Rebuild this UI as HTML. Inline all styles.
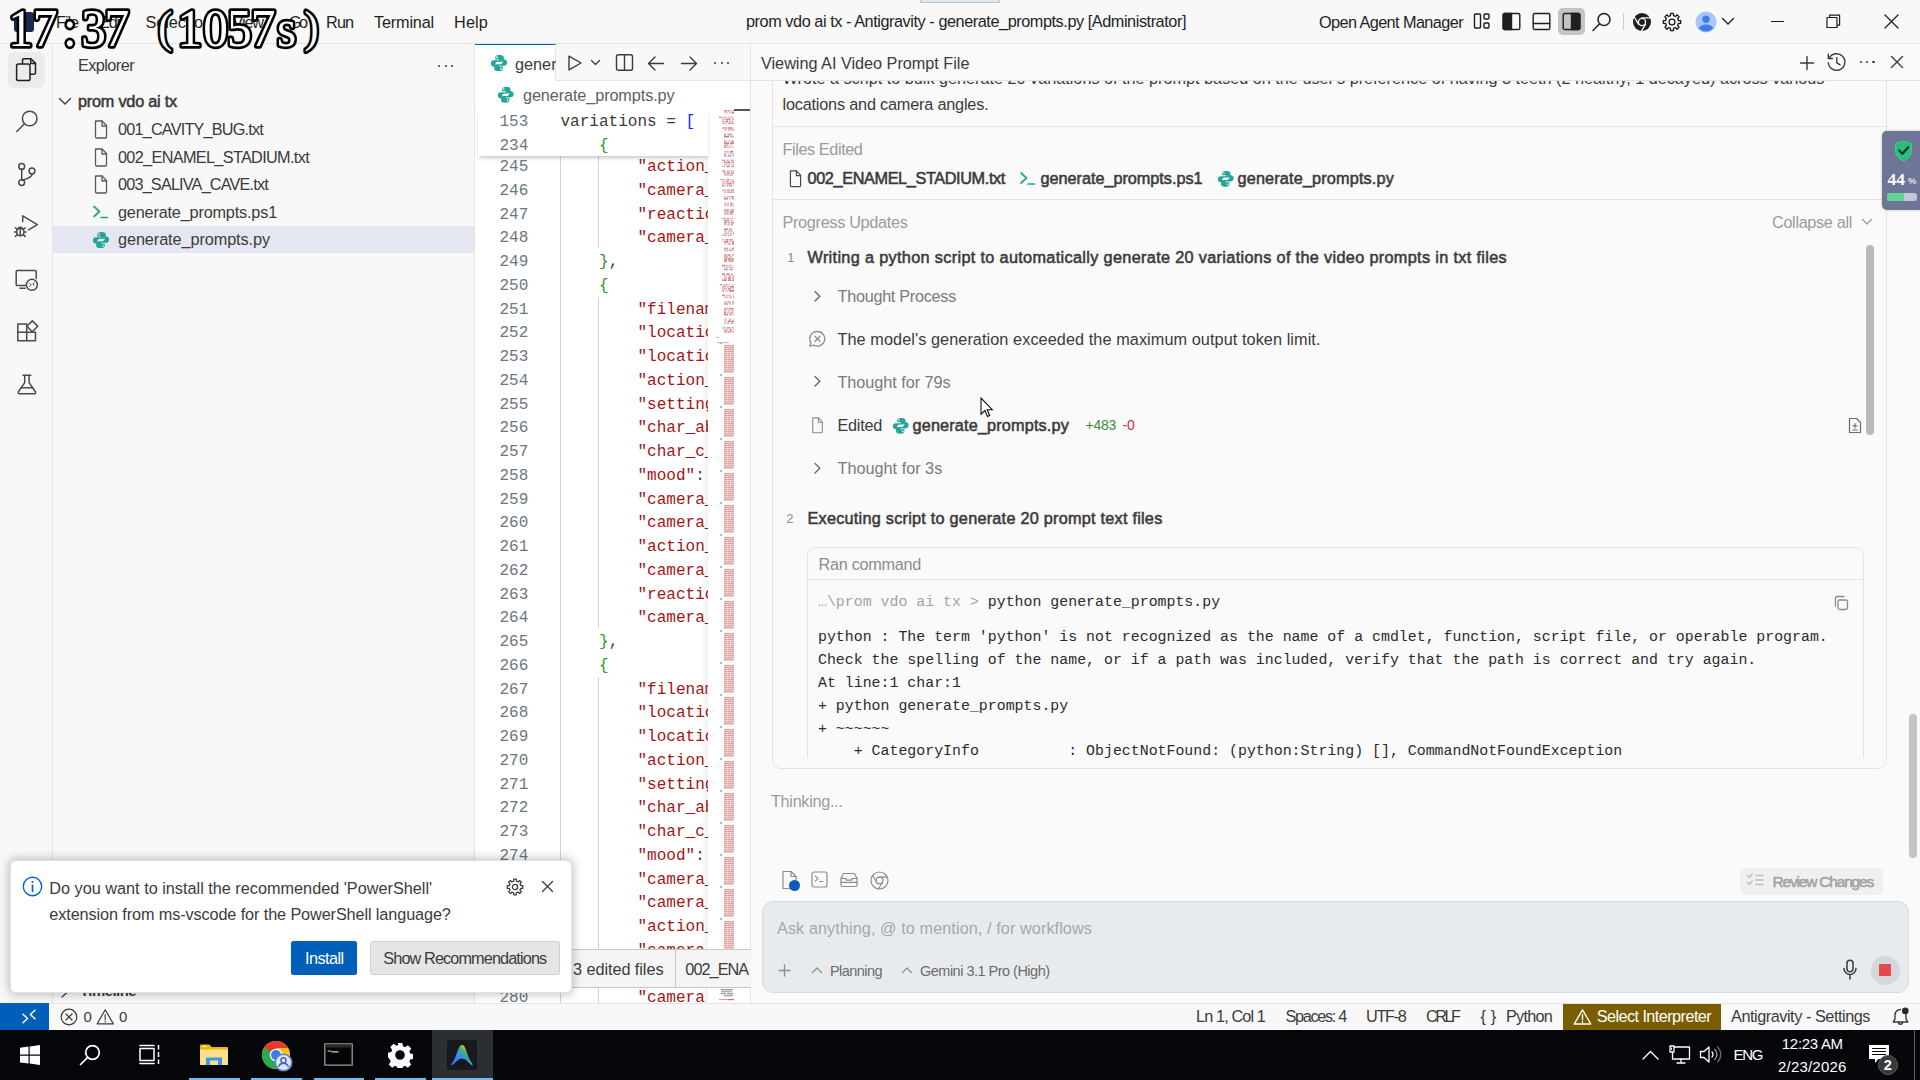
<!DOCTYPE html>
<html lang="en"><head><meta charset="utf-8"><title>prom vdo ai tx - Antigravity</title>
<style>
*{box-sizing:border-box;margin:0;padding:0}
html,body{width:1920px;height:1080px;overflow:hidden;background:#f8f8f8}
body{font-family:"Liberation Sans",sans-serif;position:relative}
.a{position:absolute;display:block}
.t{position:absolute;white-space:pre;line-height:20px;display:block}
.m{font-family:"Liberation Mono",monospace}
.sf{font-family:"Liberation Serif",serif}
</style></head>
<body>
<div class="a" style="left:0px;top:0px;width:1920px;height:44px;background:#f8f8f8;border-bottom:1px solid #e5e5e5;"></div>
<div class="a" style="left:920px;top:-1px;width:80px;height:4px;background:#dfe6ee;border:1px solid #b9c4d2;"></div>
<div class="a" style="left:14px;top:12px;width:20px;height:20px;background:#1b2a55;border-radius:3px;"></div>
<span class="t" id="t1" style="left:56px;top:11.97px;font-size:16.25px;color:#1f1f1f;letter-spacing:-1.047px;">File</span>
<span class="t" id="t2" style="left:99px;top:11.97px;font-size:16.25px;color:#1f1f1f;letter-spacing:-1.129px;">Edit</span>
<span class="t" id="t3" style="left:145.5px;top:11.97px;font-size:16.25px;color:#1f1f1f;letter-spacing:-0.040px;">Selection</span>
<span class="t" id="t4" style="left:232.5px;top:11.97px;font-size:16.25px;color:#1f1f1f;letter-spacing:-1.109px;">View</span>
<span class="t" id="t5" style="left:289px;top:11.97px;font-size:16.25px;color:#1f1f1f;letter-spacing:-2.594px;">Go</span>
<span class="t" id="t6" style="left:326px;top:11.97px;font-size:16.25px;color:#1f1f1f;letter-spacing:-0.837px;">Run</span>
<span class="t" id="t7" style="left:374px;top:11.97px;font-size:16.25px;color:#1f1f1f;letter-spacing:-0.176px;">Terminal</span>
<span class="t" id="t8" style="left:454px;top:11.97px;font-size:16.25px;color:#1f1f1f;letter-spacing:0.145px;">Help</span>
<span class="t" id="t9" style="left:746px;top:11.27px;font-size:16.25px;color:#1f1f1f;letter-spacing:-0.436px;">prom vdo ai tx - Antigravity - generate_prompts.py [Administrator]</span>
<span class="t" id="t10" style="left:1319px;top:11.57px;font-size:16.25px;color:#1f1f1f;letter-spacing:-0.583px;">Open Agent Manager</span>
<svg class="a" style="left:1473px;top:12px;" width="18" height="18" viewBox="0 0 18 18" fill="none" stroke="#1f1f1f" stroke-width="1.4" stroke-linecap="round" stroke-linejoin="round"><rect x="1.5" y="2" width="6" height="14" rx="1"/><rect x="11" y="2" width="5" height="5" rx="1"/><rect x="11" y="11" width="5" height="5" rx="1"/></svg>
<svg class="a" style="left:1502px;top:12px;" width="19" height="19" viewBox="0 0 19 19" fill="none" stroke="#1f1f1f" stroke-width="1.4" stroke-linecap="round" stroke-linejoin="round"><rect x="1.2" y="1.5" width="16.6" height="16" rx="1.6"/><path d="M1.2 3.1a1.6 1.6 0 0 1 1.6-1.6H9.5v16H2.8a1.6 1.6 0 0 1-1.6-1.6z" fill="#1f1f1f"/></svg>
<svg class="a" style="left:1532px;top:12px;" width="19" height="19" viewBox="0 0 19 19" fill="none" stroke="#1f1f1f" stroke-width="1.4" stroke-linecap="round" stroke-linejoin="round"><rect x="1.2" y="1.5" width="16.6" height="16" rx="1.6"/><path d="M1.2 11.5h16.6"/></svg>
<div class="a" style="left:1558px;top:8px;width:27px;height:27px;background:#c4c4c4;border-radius:5px;"></div>
<svg class="a" style="left:1562px;top:12px;" width="19" height="19" viewBox="0 0 19 19" fill="none" stroke="#1f1f1f" stroke-width="1.4" stroke-linecap="round" stroke-linejoin="round"><rect x="1.2" y="1.5" width="16.6" height="16" rx="1.6"/><path d="M9.5 1.5h6.7a1.6 1.6 0 0 1 1.6 1.6v12.8a1.6 1.6 0 0 1-1.6 1.6H9.5z" fill="#1f1f1f"/></svg>
<svg class="a" style="left:1591px;top:11px;" width="22" height="22" viewBox="0 0 22 22" fill="none" stroke="#1f1f1f" stroke-width="1.5" stroke-linecap="round" stroke-linejoin="round"><circle cx="13" cy="8.5" r="6"/><path d="M8.7 12.8L2 19.5"/></svg>
<div class="a" style="left:1623px;top:13px;width:1px;height:17px;background:#cfcfcf;"></div>
<svg class="a" style="left:1632px;top:12px;" width="20" height="20" viewBox="0 0 20 20" fill="none" stroke="#424242" stroke-width="1.25" stroke-linecap="round" stroke-linejoin="round"><circle cx="10" cy="10" r="9" fill="#1f1f1f" stroke="none"/><circle cx="10" cy="10" r="4.2" fill="#f8f8f8" stroke="none"/><circle cx="10" cy="10" r="2.9" fill="#1f1f1f" stroke="none"/><path d="M10 5.8h8.2M6.4 12.1L2.3 5M13.6 12.1L9.5 19.2" stroke="#f8f8f8" stroke-width="1.3"/></svg>
<svg class="a" style="left:1662px;top:12px;" width="20" height="20" viewBox="0 0 20 20" fill="none" stroke="#1f1f1f" stroke-width="1.35" stroke-linecap="round" stroke-linejoin="round"><path d="M16.44 8.54L18.68 8.56L18.68 11.44L16.44 11.46L15.58 13.52L17.16 15.12L15.12 17.16L13.52 15.58L11.46 16.44L11.44 18.68L8.56 18.68L8.54 16.44L6.48 15.58L4.88 17.16L2.84 15.12L4.42 13.52L3.56 11.46L1.32 11.44L1.32 8.56L3.56 8.54L4.42 6.48L2.84 4.88L4.88 2.84L6.48 4.42L8.54 3.56L8.56 1.32L11.44 1.32L11.46 3.56L13.52 4.42L15.12 2.84L17.16 4.88L15.58 6.48z"/><circle cx="10" cy="10" r="2.9"/></svg>
<svg class="a" style="left:1695px;top:11px;" width="22" height="22" viewBox="0 0 22 22" fill="none" stroke="#424242" stroke-width="1.25" stroke-linecap="round" stroke-linejoin="round"><circle cx="11" cy="11" r="10.5" fill="#a9c6fb" stroke="none"/><circle cx="11" cy="8.3" r="3.7" fill="#3f7de8" stroke="none"/><path d="M3.8 17.6c1.2-3 4-4 7.2-4s6 1 7.2 4a10.5 10.5 0 0 1-14.4 0z" fill="#3f7de8" stroke="none"/></svg>
<svg class="a" style="left:1721px;top:17px;" width="14" height="9" viewBox="0 0 14 9" fill="none" stroke="#1f1f1f" stroke-width="1.4" stroke-linecap="round" stroke-linejoin="round"><path d="M1.5 1.5L7 7l5.5-5.5"/></svg>
<div class="a" style="left:1771px;top:21px;width:13px;height:1.3px;background:#1f1f1f;"></div>
<svg class="a" style="left:1826px;top:14px;" width="15" height="15" viewBox="0 0 15 15" fill="none" stroke="#1f1f1f" stroke-width="1.2" stroke-linecap="round" stroke-linejoin="round"><rect x="1" y="3.5" width="10" height="10" /><path d="M3.6 3.5V1.2h10v10h-2.4"/></svg>
<svg class="a" style="left:1884px;top:14px;" width="15" height="15" viewBox="0 0 15 15" fill="none" stroke="#1f1f1f" stroke-width="1.3" stroke-linecap="round" stroke-linejoin="round"><path d="M1 1l13 13M14 1L1 14"/></svg>
<div class="a" style="left:0px;top:44px;width:53px;height:959px;background:#f8f8f8;border-right:1px solid #e5e5e5;"></div>
<div class="a" style="left:8px;top:52px;width:37px;height:36px;background:#ebebeb;border-radius:6px;"></div>
<svg class="a" style="left:0;top:44px" width="53" height="400" viewBox="0 44 53 400" fill="none" stroke="#4a4a4a" stroke-width="1.500" stroke-linecap="round" stroke-linejoin="round"><g stroke="#1f1f1f"><path d="M22.500 63.500V60.200a1.400 1.400 0 0 1 1.400-1.400h7l4.600 4.600v9.400a1.400 1.400 0 0 1-1.400 1.400H30.300"/><path d="M30.700 58.900v4.700h4.700"/><rect x="16.600" y="63.900" width="13.400" height="16.600" rx="1.800" fill="#ebebeb"/></g><circle cx="29.700" cy="118.500" r="7.300"/><path d="M24.500 123.800L16.800 131.500"/><circle cx="21.700" cy="166.400" r="2.900"/><circle cx="21.700" cy="182.600" r="2.900"/><circle cx="32" cy="171" r="2.900"/><path d="M21.700 169.300v10.400M32 173.900c0 3.600-4.500 4.300-9.500 6.300"/><path d="M22.700 221.500v-5.700l14.700 8.900-9 5.200"/><circle cx="20.300" cy="232" r="3.700"/><path d="M17.800 229.200a2.600 2.600 0 0 1 5 0M20.300 228.400v7.200M14.500 232h2.100M24 232h2.100M15.400 227.700l1.900 1.700M25.200 227.700l-1.900 1.700M15.400 236.400l1.900-1.800M25.200 236.400l-1.900-1.800"/><path d="M25.500 285.600H17.400a1.200 1.200 0 0 1-1.200-1.200V271.600a1.200 1.200 0 0 1 1.200-1.200H35a1.200 1.200 0 0 1 1.200 1.200V278.500"/><path d="M20 288.300h5.200"/><circle cx="31.900" cy="284.800" r="5.500"/><path d="M29.700 283.300l1.400 1.500-1.400 1.500M34.200 282.700l-1.400 1.300 1.400 1.300" stroke-width="1"/><path d="M17.800 324.100h8.900v16.600h-8.900zM17.800 332.300h17.700v8.400h-8.800"/><path d="M32.300 320.900l5.400 5.400-5.400 5.400-5.400-5.400z"/><path d="M23 375.300h7.800M24.700 375.300v7.300L18.300 392a1.100 1.100 0 0 0 .9 1.700h15.400a1.100 1.100 0 0 0 .9-1.700l-6.400-9.400v-7.300"/><path d="M21.200 387.800h11.400"/></svg>
<div class="a" style="left:53px;top:44px;width:422px;height:959px;background:#f8f8f8;border-right:1px solid #e5e5e5;"></div>
<span class="t" id="t11" style="left:78px;top:55.37px;font-size:16.25px;color:#3b3b3b;letter-spacing:-0.564px;">Explorer</span>
<div class="a" style="left:438px;top:65px;width:2.2px;height:2.2px;background:#3b3b3b;border-radius:50%;"></div>
<div class="a" style="left:444.5px;top:65px;width:2.2px;height:2.2px;background:#3b3b3b;border-radius:50%;"></div>
<div class="a" style="left:451px;top:65px;width:2.2px;height:2.2px;background:#3b3b3b;border-radius:50%;"></div>
<svg class="a" style="left:58px;top:96px;" width="14" height="12" viewBox="0 0 14 12" fill="none" stroke="#3b3b3b" stroke-width="1.4" stroke-linecap="round" stroke-linejoin="round"><path d="M1.5 2.5L7 8l5.5-5.5"/></svg>
<span class="t" id="t12" style="left:78px;top:91.37px;font-size:16.25px;color:#3b3b3b;-webkit-text-stroke:.550px #3b3b3b;letter-spacing:-0.219px;">prom vdo ai tx</span>
<div class="a" style="left:53px;top:225.5px;width:421px;height:27.5px;background:#e4e6f1;"></div>
<svg class="a" style="left:94px;top:120.0px;" width="15" height="20" viewBox="0 0 15 20" fill="none" stroke="#5a5a5a" stroke-width="1.3" stroke-linecap="round" stroke-linejoin="round"><path d="M2 1.5h6.5L13 6v11.3a1.2 1.2 0 0 1-1.2 1.200H3.200A1.2 1.2 0 0 1 2 17.300V2.700A1.2 1.2 0 0 1 3.200 1.500z" transform="translate(-0.5,-0.5)"/><path d="M8 1v5h4.500"/></svg>
<span class="t" id="t13" style="left:118px;top:119.37px;font-size:16.25px;color:#3b3b3b;letter-spacing:-0.809px;">001_CAVITY_BUG.txt</span>
<svg class="a" style="left:94px;top:147.5px;" width="15" height="20" viewBox="0 0 15 20" fill="none" stroke="#5a5a5a" stroke-width="1.3" stroke-linecap="round" stroke-linejoin="round"><path d="M2 1.5h6.5L13 6v11.3a1.2 1.2 0 0 1-1.2 1.200H3.200A1.2 1.2 0 0 1 2 17.300V2.700A1.2 1.2 0 0 1 3.200 1.500z" transform="translate(-0.5,-0.5)"/><path d="M8 1v5h4.500"/></svg>
<span class="t" id="t14" style="left:118px;top:146.87px;font-size:16.25px;color:#3b3b3b;letter-spacing:-0.664px;">002_ENAMEL_STADIUM.txt</span>
<svg class="a" style="left:94px;top:175.0px;" width="15" height="20" viewBox="0 0 15 20" fill="none" stroke="#5a5a5a" stroke-width="1.3" stroke-linecap="round" stroke-linejoin="round"><path d="M2 1.5h6.5L13 6v11.3a1.2 1.2 0 0 1-1.2 1.200H3.200A1.2 1.2 0 0 1 2 17.300V2.700A1.2 1.2 0 0 1 3.200 1.500z" transform="translate(-0.5,-0.5)"/><path d="M8 1v5h4.500"/></svg>
<span class="t" id="t15" style="left:118px;top:174.37px;font-size:16.25px;color:#3b3b3b;letter-spacing:-0.822px;">003_SALIVA_CAVE.txt</span>
<svg class="a" style="left:92px;top:204px;" width="18" height="16" viewBox="0 0 18 16" fill="none" stroke="#2aa592" stroke-width="1.7" stroke-linecap="round" stroke-linejoin="round"><path d="M2 2.500l5.500 5L2 12.500"/><path d="M9 13.500h6.500"/></svg>
<span class="t" id="t16" style="left:118px;top:201.87px;font-size:16.25px;color:#3b3b3b;letter-spacing:-0.180px;">generate_prompts.ps1</span>
<svg class="a" style="left:92px;top:230.5px;" width="18" height="18" viewBox="0 0 16 16" fill="#26a69a" stroke="none" stroke-width="0" stroke-linecap="round" stroke-linejoin="round"><path d="M7.900.8C5.700.8 4.700 1.700 4.700 3v1.900h3.400v.7H3.300C1.900 5.600.8 6.700.8 8.400s1 2.800 2.400 2.800h1.500V9.300c0-1.300 1.100-2.400 2.400-2.400h3.300c1.100 0 1.900-.9 1.900-2V3c0-1.200-1.200-2.200-3-2.200zM6.200 2.100a.75.75 0 1 1 0 1.500.75.75 0 0 1 0-1.500z"/><path d="M8.100 15.200c2.200 0 3.200-.9 3.200-2.200v-1.900H7.900v-.7h4.800c1.400 0 2.500-1.100 2.500-2.800s-1-2.800-2.400-2.800h-1.500v1.900c0 1.300-1.100 2.400-2.400 2.400H5.600c-1.100 0-1.900.9-1.900 2V13c0 1.200 1.200 2.200 3 2.200zM9.800 13.900a.75.750 0 1 1 0-1.500.750.750 0 0 1 0 1.500z"/></svg>
<span class="t" id="t17" style="left:118px;top:229.37px;font-size:16.25px;color:#3b3b3b;letter-spacing:-0.083px;">generate_prompts.py</span>
<span class="t" id="t18" style="left:80px;top:980.80px;font-size:15px;color:#3b3b3b;font-weight:700;letter-spacing:-0.574px;">Timeline</span>
<svg class="a" style="left:60px;top:986px;" width="10" height="12" viewBox="0 0 10 12" fill="none" stroke="#3b3b3b" stroke-width="1.3" stroke-linecap="round" stroke-linejoin="round"><path d="M2 2l5 4.500-5 4.500"/></svg>
<div class="a" style="left:475px;top:44px;width:276px;height:959px;background:#ffffff;border-right:1px solid #e5e5e5;"></div>
<div class="a" style="left:475px;top:44px;width:275px;height:37px;background:#f8f8f8;border-bottom:1px solid #e5e5e5;"></div>
<div class="a" style="left:475px;top:44px;width:81px;height:37px;background:#ffffff;border-top:1.5px solid #005fb8;border-right:1px solid #e5e5e5;overflow:hidden;"></div>
<svg class="a" style="left:489.5px;top:54px;" width="18" height="18" viewBox="0 0 16 16" fill="#26a69a" stroke="none" stroke-width="0" stroke-linecap="round" stroke-linejoin="round"><path d="M7.900.8C5.700.8 4.700 1.700 4.700 3v1.900h3.400v.7H3.300C1.900 5.600.8 6.700.8 8.400s1 2.800 2.400 2.800h1.500V9.300c0-1.300 1.100-2.400 2.400-2.400h3.300c1.100 0 1.900-.9 1.900-2V3c0-1.200-1.200-2.200-3-2.200zM6.200 2.100a.75.75 0 1 1 0 1.500.75.75 0 0 1 0-1.500z"/><path d="M8.100 15.200c2.200 0 3.200-.9 3.200-2.200v-1.900H7.900v-.7h4.800c1.400 0 2.500-1.100 2.500-2.800s-1-2.800-2.400-2.800h-1.500v1.900c0 1.300-1.100 2.400-2.400 2.400H5.600c-1.100 0-1.900.9-1.900 2V13c0 1.200 1.200 2.200 3 2.200zM9.800 13.900a.75.750 0 1 1 0-1.500.750.750 0 0 1 0 1.500z"/></svg>
<div class="a" style="left:515px;top:50px;width:41px;height:28px;overflow:hidden"><span class="t" style="left:0;top:3.8px;font-size:16.25px;color:#3b3b3b">generate_prompts.py</span></div>
<svg class="a" style="left:566px;top:54px;" width="18" height="18" viewBox="0 0 18 18" fill="none" stroke="#3b3b3b" stroke-width="1.4" stroke-linecap="round" stroke-linejoin="round"><path d="M3 2.2l12 6.800-12 6.800z"/></svg>
<svg class="a" style="left:590px;top:59px;" width="11" height="8" viewBox="0 0 11 8" fill="none" stroke="#3b3b3b" stroke-width="1.2" stroke-linecap="round" stroke-linejoin="round"><path d="M1.5 1.500l4 4 4-4"/></svg>
<svg class="a" style="left:615px;top:53px;" width="19" height="19" viewBox="0 0 19 19" fill="none" stroke="#3b3b3b" stroke-width="1.4" stroke-linecap="round" stroke-linejoin="round"><rect x="1.5" y="1.800" width="16" height="15.400" rx="1.800"/><path d="M9.500 1.800v15.400"/></svg>
<svg class="a" style="left:647px;top:55px;" width="18" height="17" viewBox="0 0 18 17" fill="none" stroke="#3b3b3b" stroke-width="1.4" stroke-linecap="round" stroke-linejoin="round"><path d="M16.500 8.500H1.800M8 2L1.500 8.500 8 15"/></svg>
<svg class="a" style="left:680px;top:55px;" width="18" height="17" viewBox="0 0 18 17" fill="none" stroke="#3b3b3b" stroke-width="1.4" stroke-linecap="round" stroke-linejoin="round"><path d="M1.500 8.500h14.700M10 2l6.500 6.500L10 15"/></svg>
<div class="a" style="left:714px;top:62px;width:2.3px;height:2.3px;background:#3b3b3b;border-radius:50%;"></div>
<div class="a" style="left:720.5px;top:62px;width:2.3px;height:2.3px;background:#3b3b3b;border-radius:50%;"></div>
<div class="a" style="left:727px;top:62px;width:2.3px;height:2.3px;background:#3b3b3b;border-radius:50%;"></div>
<svg class="a" style="left:496.5px;top:86px;" width="17.5" height="17.5" viewBox="0 0 16 16" fill="#26a69a" stroke="none" stroke-width="0" stroke-linecap="round" stroke-linejoin="round"><path d="M7.900.8C5.700.8 4.700 1.700 4.700 3v1.900h3.400v.7H3.300C1.900 5.600.8 6.700.8 8.400s1 2.800 2.400 2.800h1.500V9.300c0-1.300 1.100-2.400 2.400-2.400h3.300c1.100 0 1.900-.9 1.900-2V3c0-1.200-1.200-2.200-3-2.200zM6.200 2.100a.75.75 0 1 1 0 1.500.75.75 0 0 1 0-1.500z"/><path d="M8.100 15.200c2.200 0 3.200-.9 3.200-2.200v-1.900H7.900v-.7h4.800c1.400 0 2.500-1.100 2.500-2.800s-1-2.800-2.400-2.800h-1.500v1.900c0 1.300-1.100 2.400-2.400 2.400H5.600c-1.100 0-1.900.9-1.900 2V13c0 1.200 1.200 2.200 3 2.200zM9.800 13.900a.75.750 0 1 1 0-1.500.750.750 0 0 1 0 1.500z"/></svg>
<span class="t" id="t19" style="left:523px;top:85.37px;font-size:16.25px;color:#616161;letter-spacing:-0.109px;">generate_prompts.py</span>
<div class="a" style="left:475px;top:156px;width:232.500px;height:847px;overflow:hidden"><div class="a" style="left:-475px;top:-156px;width:1920px;height:1080px">
<div class="a" style="left:560px;top:156px;width:1px;height:847px;background:#d3d3d3;"></div>
<div class="a" style="left:598px;top:156px;width:1px;height:92.4px;background:#d3d3d3;"></div>
<div class="a" style="left:598px;top:296.5px;width:1px;height:331.8px;background:#d3d3d3;"></div>
<div class="a" style="left:598px;top:676.5px;width:1px;height:330px;background:#d3d3d3;"></div>
<span class="t m" id="t20" style="left:499.5px;top:157.03px;font-size:16.04px;color:#6e7681;">245</span>
<span class="t m" id="t21" style="left:637.5px;top:157.03px;font-size:16.04px;color:#3b3b3b;"><span style="color:#a31515">"action_2"</span>: <span style="color:#a31515">"the teeth shake"</span>,</span>
<span class="t m" id="t22" style="left:499.5px;top:180.78px;font-size:16.04px;color:#6e7681;">246</span>
<span class="t m" id="t23" style="left:637.5px;top:180.78px;font-size:16.04px;color:#3b3b3b;"><span style="color:#a31515">"camera_3"</span>: <span style="color:#a31515">"handheld close"</span>,</span>
<span class="t m" id="t24" style="left:499.5px;top:204.53px;font-size:16.04px;color:#6e7681;">247</span>
<span class="t m" id="t25" style="left:637.5px;top:204.53px;font-size:16.04px;color:#3b3b3b;"><span style="color:#a31515">"reaction"</span>: <span style="color:#a31515">"gasp and scream"</span>,</span>
<span class="t m" id="t26" style="left:499.5px;top:228.28px;font-size:16.04px;color:#6e7681;">248</span>
<span class="t m" id="t27" style="left:637.5px;top:228.28px;font-size:16.04px;color:#3b3b3b;"><span style="color:#a31515">"camera_4"</span>: <span style="color:#a31515">"slow crane out"</span>,</span>
<span class="t m" id="t28" style="left:499.5px;top:252.03px;font-size:16.04px;color:#6e7681;">249</span>
<span class="t m" id="t29" style="left:599.0px;top:252.03px;font-size:16.04px;color:#3b3b3b;"><span style="color:#319331">}</span>,</span>
<span class="t m" id="t30" style="left:499.5px;top:275.78px;font-size:16.04px;color:#6e7681;">250</span>
<span class="t m" id="t31" style="left:599.0px;top:275.78px;font-size:16.04px;color:#3b3b3b;"><span style="color:#319331">{</span></span>
<span class="t m" id="t32" style="left:499.5px;top:299.53px;font-size:16.04px;color:#6e7681;">251</span>
<span class="t m" id="t33" style="left:637.5px;top:299.53px;font-size:16.04px;color:#3b3b3b;"><span style="color:#a31515">"filename"</span>: <span style="color:#a31515">"005_SCENE.txt"</span>,</span>
<span class="t m" id="t34" style="left:499.5px;top:323.28px;font-size:16.04px;color:#6e7681;">252</span>
<span class="t m" id="t35" style="left:637.5px;top:323.28px;font-size:16.04px;color:#3b3b3b;"><span style="color:#a31515">"location_en"</span>: <span style="color:#a31515">"inside the mouth"</span>,</span>
<span class="t m" id="t36" style="left:499.5px;top:347.03px;font-size:16.04px;color:#6e7681;">253</span>
<span class="t m" id="t37" style="left:637.5px;top:347.03px;font-size:16.04px;color:#3b3b3b;"><span style="color:#a31515">"location_th"</span>: <span style="color:#a31515">"in the cave"</span>,</span>
<span class="t m" id="t38" style="left:499.5px;top:370.78px;font-size:16.04px;color:#6e7681;">254</span>
<span class="t m" id="t39" style="left:637.5px;top:370.78px;font-size:16.04px;color:#3b3b3b;"><span style="color:#a31515">"action_1"</span>: <span style="color:#a31515">"The tiny bug digs"</span>,</span>
<span class="t m" id="t40" style="left:499.5px;top:394.53px;font-size:16.04px;color:#6e7681;">255</span>
<span class="t m" id="t41" style="left:637.5px;top:394.53px;font-size:16.04px;color:#3b3b3b;"><span style="color:#a31515">"setting"</span>: <span style="color:#a31515">"wet enamel walls"</span>,</span>
<span class="t m" id="t42" style="left:499.5px;top:418.28px;font-size:16.04px;color:#6e7681;">256</span>
<span class="t m" id="t43" style="left:637.5px;top:418.28px;font-size:16.04px;color:#3b3b3b;"><span style="color:#a31515">"char_ab"</span>: <span style="color:#a31515">"healthy tooth A"</span>,</span>
<span class="t m" id="t44" style="left:499.5px;top:442.03px;font-size:16.04px;color:#6e7681;">257</span>
<span class="t m" id="t45" style="left:637.5px;top:442.03px;font-size:16.04px;color:#3b3b3b;"><span style="color:#a31515">"char_c_desc"</span>: <span style="color:#a31515">"decayed tooth"</span>,</span>
<span class="t m" id="t46" style="left:499.5px;top:465.78px;font-size:16.04px;color:#6e7681;">258</span>
<span class="t m" id="t47" style="left:637.5px;top:465.78px;font-size:16.04px;color:#3b3b3b;"><span style="color:#a31515">"mood"</span>: <span style="color:#a31515">"dark comedy"</span>,</span>
<span class="t m" id="t48" style="left:499.5px;top:489.53px;font-size:16.04px;color:#6e7681;">259</span>
<span class="t m" id="t49" style="left:637.5px;top:489.53px;font-size:16.04px;color:#3b3b3b;"><span style="color:#a31515">"camera_1"</span>: <span style="color:#a31515">"macro dolly in"</span>,</span>
<span class="t m" id="t50" style="left:499.5px;top:513.28px;font-size:16.04px;color:#6e7681;">260</span>
<span class="t m" id="t51" style="left:637.5px;top:513.28px;font-size:16.04px;color:#3b3b3b;"><span style="color:#a31515">"camera_2"</span>: <span style="color:#a31515">"low angle pan"</span>,</span>
<span class="t m" id="t52" style="left:499.5px;top:537.03px;font-size:16.04px;color:#6e7681;">261</span>
<span class="t m" id="t53" style="left:637.5px;top:537.03px;font-size:16.04px;color:#3b3b3b;"><span style="color:#a31515">"action_2"</span>: <span style="color:#a31515">"the teeth shake"</span>,</span>
<span class="t m" id="t54" style="left:499.5px;top:560.78px;font-size:16.04px;color:#6e7681;">262</span>
<span class="t m" id="t55" style="left:637.5px;top:560.78px;font-size:16.04px;color:#3b3b3b;"><span style="color:#a31515">"camera_3"</span>: <span style="color:#a31515">"handheld close"</span>,</span>
<span class="t m" id="t56" style="left:499.5px;top:584.53px;font-size:16.04px;color:#6e7681;">263</span>
<span class="t m" id="t57" style="left:637.5px;top:584.53px;font-size:16.04px;color:#3b3b3b;"><span style="color:#a31515">"reaction"</span>: <span style="color:#a31515">"gasp and scream"</span>,</span>
<span class="t m" id="t58" style="left:499.5px;top:608.28px;font-size:16.04px;color:#6e7681;">264</span>
<span class="t m" id="t59" style="left:637.5px;top:608.28px;font-size:16.04px;color:#3b3b3b;"><span style="color:#a31515">"camera_4"</span>: <span style="color:#a31515">"slow crane out"</span>,</span>
<span class="t m" id="t60" style="left:499.5px;top:632.03px;font-size:16.04px;color:#6e7681;">265</span>
<span class="t m" id="t61" style="left:599.0px;top:632.03px;font-size:16.04px;color:#3b3b3b;"><span style="color:#319331">}</span>,</span>
<span class="t m" id="t62" style="left:499.5px;top:655.78px;font-size:16.04px;color:#6e7681;">266</span>
<span class="t m" id="t63" style="left:599.0px;top:655.78px;font-size:16.04px;color:#3b3b3b;"><span style="color:#319331">{</span></span>
<span class="t m" id="t64" style="left:499.5px;top:679.53px;font-size:16.04px;color:#6e7681;">267</span>
<span class="t m" id="t65" style="left:637.5px;top:679.53px;font-size:16.04px;color:#3b3b3b;"><span style="color:#a31515">"filename"</span>: <span style="color:#a31515">"006_SCENE.txt"</span>,</span>
<span class="t m" id="t66" style="left:499.5px;top:703.28px;font-size:16.04px;color:#6e7681;">268</span>
<span class="t m" id="t67" style="left:637.5px;top:703.28px;font-size:16.04px;color:#3b3b3b;"><span style="color:#a31515">"location_en"</span>: <span style="color:#a31515">"inside the mouth"</span>,</span>
<span class="t m" id="t68" style="left:499.5px;top:727.03px;font-size:16.04px;color:#6e7681;">269</span>
<span class="t m" id="t69" style="left:637.5px;top:727.03px;font-size:16.04px;color:#3b3b3b;"><span style="color:#a31515">"location_th"</span>: <span style="color:#a31515">"in the cave"</span>,</span>
<span class="t m" id="t70" style="left:499.5px;top:750.78px;font-size:16.04px;color:#6e7681;">270</span>
<span class="t m" id="t71" style="left:637.5px;top:750.78px;font-size:16.04px;color:#3b3b3b;"><span style="color:#a31515">"action_1"</span>: <span style="color:#a31515">"The tiny bug digs"</span>,</span>
<span class="t m" id="t72" style="left:499.5px;top:774.53px;font-size:16.04px;color:#6e7681;">271</span>
<span class="t m" id="t73" style="left:637.5px;top:774.53px;font-size:16.04px;color:#3b3b3b;"><span style="color:#a31515">"setting"</span>: <span style="color:#a31515">"wet enamel walls"</span>,</span>
<span class="t m" id="t74" style="left:499.5px;top:798.28px;font-size:16.04px;color:#6e7681;">272</span>
<span class="t m" id="t75" style="left:637.5px;top:798.28px;font-size:16.04px;color:#3b3b3b;"><span style="color:#a31515">"char_ab"</span>: <span style="color:#a31515">"healthy tooth A"</span>,</span>
<span class="t m" id="t76" style="left:499.5px;top:822.03px;font-size:16.04px;color:#6e7681;">273</span>
<span class="t m" id="t77" style="left:637.5px;top:822.03px;font-size:16.04px;color:#3b3b3b;"><span style="color:#a31515">"char_c_desc"</span>: <span style="color:#a31515">"decayed tooth"</span>,</span>
<span class="t m" id="t78" style="left:499.5px;top:845.78px;font-size:16.04px;color:#6e7681;">274</span>
<span class="t m" id="t79" style="left:637.5px;top:845.78px;font-size:16.04px;color:#3b3b3b;"><span style="color:#a31515">"mood"</span>: <span style="color:#a31515">"dark comedy"</span>,</span>
<span class="t m" id="t80" style="left:499.5px;top:869.53px;font-size:16.04px;color:#6e7681;">275</span>
<span class="t m" id="t81" style="left:637.5px;top:869.53px;font-size:16.04px;color:#3b3b3b;"><span style="color:#a31515">"camera_1"</span>: <span style="color:#a31515">"macro dolly in"</span>,</span>
<span class="t m" id="t82" style="left:499.5px;top:893.28px;font-size:16.04px;color:#6e7681;">276</span>
<span class="t m" id="t83" style="left:637.5px;top:893.28px;font-size:16.04px;color:#3b3b3b;"><span style="color:#a31515">"camera_2"</span>: <span style="color:#a31515">"low angle pan"</span>,</span>
<span class="t m" id="t84" style="left:499.5px;top:917.03px;font-size:16.04px;color:#6e7681;">277</span>
<span class="t m" id="t85" style="left:637.5px;top:917.03px;font-size:16.04px;color:#3b3b3b;"><span style="color:#a31515">"action_2"</span>: <span style="color:#a31515">"the teeth shake"</span>,</span>
<span class="t m" id="t86" style="left:499.5px;top:940.78px;font-size:16.04px;color:#6e7681;">278</span>
<span class="t m" id="t87" style="left:637.5px;top:940.78px;font-size:16.04px;color:#3b3b3b;"><span style="color:#a31515">"camera_3"</span>: <span style="color:#a31515">"handheld close"</span>,</span>
<span class="t m" id="t88" style="left:499.5px;top:964.53px;font-size:16.04px;color:#6e7681;">279</span>
<span class="t m" id="t89" style="left:637.5px;top:964.53px;font-size:16.04px;color:#3b3b3b;"><span style="color:#a31515">"reaction"</span>: <span style="color:#a31515">"gasp and scream"</span>,</span>
<span class="t m" id="t90" style="left:499.5px;top:988.28px;font-size:16.04px;color:#6e7681;">280</span>
<span class="t m" id="t91" style="left:637.5px;top:988.28px;font-size:16.04px;color:#3b3b3b;"><span style="color:#a31515">"camera_4"</span>: <span style="color:#a31515">"slow crane out"</span>,</span>
</div></div>
<div class="a" style="left:478px;top:108px;width:229.5px;height:48px;background:#ffffff;box-shadow:0 3px 4px -1px rgba(0,0,0,.22);"></div>
<span class="t m" id="t92" style="left:499.5px;top:112.13px;font-size:16.04px;color:#6e7681;">153</span>
<span class="t m" id="t93" style="left:560.5px;top:112.13px;font-size:16.04px;color:#3b3b3b;">variations = <span style="color:#0431fa">[</span></span>
<span class="t m" id="t94" style="left:499.5px;top:135.93px;font-size:16.04px;color:#6e7681;">234</span>
<span class="t m" id="t95" style="left:599.0px;top:135.93px;font-size:16.04px;color:#319331;">{</span>
<div class="a" style="left:701px;top:156px;width:7px;height:847px;background:linear-gradient(to right,rgba(255,255,255,0),rgba(0,0,0,.06));"></div>
<div class="a" style="left:734px;top:109px;width:16px;height:2px;background:#555555;"></div>
<svg class="a" style="left:716px;top:108px;opacity:.720;" width="20" height="240" viewBox="0 0 20 240" fill="none" stroke="none" stroke-width="0" stroke-linecap="round" stroke-linejoin="round"><rect x="8.0" y="2.0" width="3.0" height="1.600" fill="#c25a5a" opacity="0.95"/><rect x="11.6" y="2.0" width="2.0" height="1.600" fill="#b64545" opacity="0.85"/><rect x="14.2" y="2.0" width="3.8" height="1.600" fill="#c25a5a" opacity="0.55"/><rect x="8.0" y="4.0" width="4.0" height="1.600" fill="#cf7a7a" opacity="0.55"/><rect x="13.0" y="4.0" width="2.0" height="1.600" fill="#cf7a7a" opacity="0.55"/><rect x="15.6" y="4.0" width="2.4" height="1.600" fill="#b64545" opacity="0.95"/><rect x="3.0" y="8.6" width="3.0" height="1.600" fill="#b64545" opacity="0.7"/><rect x="7.0" y="8.6" width="4.0" height="1.600" fill="#c25a5a" opacity="0.55"/><rect x="12.0" y="8.6" width="5.0" height="1.600" fill="#c25a5a" opacity="0.55"/><rect x="6.0" y="10.6" width="3.0" height="1.600" fill="#b64545" opacity="0.55"/><rect x="9.6" y="10.6" width="5.0" height="1.600" fill="#c25a5a" opacity="0.95"/><rect x="16.1" y="10.6" width="1.9" height="1.600" fill="#cf7a7a" opacity="0.95"/><rect x="6.0" y="12.6" width="3.0" height="1.600" fill="#c25a5a" opacity="0.7"/><rect x="10.0" y="12.6" width="2.0" height="1.600" fill="#a83a3a" opacity="0.95"/><rect x="13.0" y="12.6" width="4.0" height="1.600" fill="#a83a3a" opacity="0.55"/><rect x="6.0" y="14.6" width="5.0" height="1.600" fill="#cf7a7a" opacity="0.7"/><rect x="12.0" y="14.6" width="3.0" height="1.600" fill="#cf7a7a" opacity="0.95"/><rect x="15.6" y="14.6" width="2.0" height="1.600" fill="#a83a3a" opacity="0.85"/><rect x="6.0" y="19.2" width="5.0" height="1.600" fill="#cf7a7a" opacity="0.95"/><rect x="11.6" y="19.2" width="2.0" height="1.600" fill="#a83a3a" opacity="0.95"/><rect x="14.2" y="19.2" width="2.0" height="1.600" fill="#a83a3a" opacity="0.95"/><rect x="17.2" y="19.2" width="0.8" height="1.600" fill="#a83a3a" opacity="0.55"/><rect x="8.0" y="21.2" width="3.0" height="1.600" fill="#c25a5a" opacity="0.55"/><rect x="12.5" y="21.2" width="2.0" height="1.600" fill="#c25a5a" opacity="0.85"/><rect x="15.5" y="21.2" width="2.5" height="1.600" fill="#cf7a7a" opacity="0.95"/><rect x="8.0" y="25.8" width="2.0" height="1.600" fill="#c25a5a" opacity="0.95"/><rect x="11.5" y="25.8" width="5.0" height="1.600" fill="#a83a3a" opacity="0.7"/><rect x="8.0" y="27.8" width="5.0" height="1.600" fill="#a83a3a" opacity="0.95"/><rect x="14.0" y="27.8" width="4.0" height="1.600" fill="#6a6ad8" opacity="0.7"/><rect x="8.0" y="32.4" width="3.0" height="1.600" fill="#c25a5a" opacity="0.7"/><rect x="12.0" y="32.4" width="2.0" height="1.600" fill="#cf7a7a" opacity="0.7"/><rect x="15.0" y="32.4" width="3.0" height="1.600" fill="#b64545" opacity="0.7"/><rect x="8.0" y="34.4" width="5.0" height="1.600" fill="#a83a3a" opacity="0.85"/><rect x="14.0" y="34.4" width="4.0" height="1.600" fill="#b64545" opacity="0.95"/><rect x="8.0" y="36.4" width="4.0" height="1.600" fill="#cf7a7a" opacity="0.95"/><rect x="12.6" y="36.4" width="4.0" height="1.600" fill="#cf7a7a" opacity="0.55"/><rect x="8.0" y="38.4" width="2.0" height="1.600" fill="#c25a5a" opacity="0.95"/><rect x="11.0" y="38.4" width="2.0" height="1.600" fill="#a83a3a" opacity="0.55"/><rect x="13.6" y="38.4" width="2.0" height="1.600" fill="#c25a5a" opacity="0.55"/><rect x="16.6" y="38.4" width="1.4" height="1.600" fill="#b64545" opacity="0.55"/><rect x="8.0" y="43.0" width="5.0" height="1.600" fill="#cf7a7a" opacity="0.7"/><rect x="14.0" y="43.0" width="3.0" height="1.600" fill="#a83a3a" opacity="0.95"/><rect x="8.0" y="45.0" width="2.0" height="1.600" fill="#cf7a7a" opacity="0.95"/><rect x="11.5" y="45.0" width="4.0" height="1.600" fill="#8585e0" opacity="0.55"/><rect x="16.5" y="45.0" width="1.5" height="1.600" fill="#8585e0" opacity="0.85"/><rect x="8.0" y="47.0" width="3.0" height="1.600" fill="#b64545" opacity="0.7"/><rect x="12.0" y="47.0" width="3.0" height="1.600" fill="#6a6ad8" opacity="0.85"/><rect x="15.6" y="47.0" width="2.4" height="1.600" fill="#8585e0" opacity="0.7"/><rect x="6.0" y="51.6" width="3.0" height="1.600" fill="#a83a3a" opacity="0.7"/><rect x="10.0" y="51.6" width="3.0" height="1.600" fill="#cf7a7a" opacity="0.7"/><rect x="14.0" y="51.6" width="4.0" height="1.600" fill="#cf7a7a" opacity="0.85"/><rect x="8.0" y="53.6" width="2.0" height="1.600" fill="#a83a3a" opacity="0.95"/><rect x="11.0" y="53.6" width="3.0" height="1.600" fill="#a83a3a" opacity="0.95"/><rect x="15.0" y="53.6" width="3.0" height="1.600" fill="#b64545" opacity="0.7"/><rect x="8.0" y="55.6" width="3.0" height="1.600" fill="#cf7a7a" opacity="0.7"/><rect x="12.0" y="55.6" width="3.0" height="1.600" fill="#cf7a7a" opacity="0.55"/><rect x="16.5" y="55.6" width="1.5" height="1.600" fill="#b64545" opacity="0.55"/><rect x="6.0" y="57.6" width="3.0" height="1.600" fill="#cf7a7a" opacity="0.7"/><rect x="10.5" y="57.6" width="3.0" height="1.600" fill="#b64545" opacity="0.95"/><rect x="15.0" y="57.6" width="3.0" height="1.600" fill="#b64545" opacity="0.7"/><rect x="6.0" y="62.2" width="3.0" height="1.600" fill="#b64545" opacity="0.7"/><rect x="10.5" y="62.2" width="3.0" height="1.600" fill="#cf7a7a" opacity="0.85"/><rect x="14.5" y="62.2" width="3.5" height="1.600" fill="#c25a5a" opacity="0.55"/><rect x="8.0" y="64.2" width="2.0" height="1.600" fill="#c25a5a" opacity="0.95"/><rect x="11.0" y="64.2" width="3.0" height="1.600" fill="#b64545" opacity="0.85"/><rect x="15.0" y="64.2" width="3.0" height="1.600" fill="#c25a5a" opacity="0.85"/><rect x="8.0" y="66.2" width="5.0" height="1.600" fill="#cf7a7a" opacity="0.7"/><rect x="13.6" y="66.2" width="3.0" height="1.600" fill="#cf7a7a" opacity="0.95"/><rect x="4.0" y="70.8" width="5.0" height="1.600" fill="#c25a5a" opacity="0.55"/><rect x="10.5" y="70.8" width="3.0" height="1.600" fill="#b64545" opacity="0.7"/><rect x="14.5" y="70.8" width="3.0" height="1.600" fill="#cf7a7a" opacity="0.55"/><rect x="6.0" y="72.8" width="3.0" height="1.600" fill="#cf7a7a" opacity="0.55"/><rect x="9.6" y="72.8" width="3.0" height="1.600" fill="#c25a5a" opacity="0.85"/><rect x="13.2" y="72.8" width="2.0" height="1.600" fill="#cf7a7a" opacity="0.55"/><rect x="15.8" y="72.8" width="2.2" height="1.600" fill="#a83a3a" opacity="0.7"/><rect x="6.0" y="74.8" width="4.0" height="1.600" fill="#cf7a7a" opacity="0.7"/><rect x="11.0" y="74.8" width="5.0" height="1.600" fill="#c25a5a" opacity="0.95"/><rect x="17.0" y="74.8" width="1.0" height="1.600" fill="#b64545" opacity="0.95"/><rect x="6.0" y="76.8" width="3.0" height="1.600" fill="#b64545" opacity="0.7"/><rect x="10.5" y="76.8" width="2.0" height="1.600" fill="#c25a5a" opacity="0.85"/><rect x="13.1" y="76.8" width="3.0" height="1.600" fill="#a83a3a" opacity="0.7"/><rect x="17.1" y="76.8" width="0.9" height="1.600" fill="#cf7a7a" opacity="0.7"/><rect x="6.0" y="81.4" width="4.0" height="1.600" fill="#cf7a7a" opacity="0.7"/><rect x="11.0" y="81.4" width="3.0" height="1.600" fill="#cf7a7a" opacity="0.95"/><rect x="15.0" y="81.4" width="3.0" height="1.600" fill="#c25a5a" opacity="0.85"/><rect x="8.0" y="83.4" width="2.0" height="1.600" fill="#a83a3a" opacity="0.55"/><rect x="11.0" y="83.4" width="5.0" height="1.600" fill="#cf7a7a" opacity="0.95"/><rect x="16.6" y="83.4" width="1.4" height="1.600" fill="#a83a3a" opacity="0.85"/><rect x="8.0" y="88.0" width="2.0" height="1.600" fill="#c25a5a" opacity="0.55"/><rect x="10.6" y="88.0" width="3.0" height="1.600" fill="#a83a3a" opacity="0.55"/><rect x="14.6" y="88.0" width="3.0" height="1.600" fill="#c25a5a" opacity="0.95"/><rect x="8.0" y="90.0" width="4.0" height="1.600" fill="#c25a5a" opacity="0.95"/><rect x="13.0" y="90.0" width="2.0" height="1.600" fill="#8585e0" opacity="0.55"/><rect x="16.0" y="90.0" width="2.0" height="1.600" fill="#6a6ad8" opacity="0.85"/><rect x="8.0" y="94.6" width="2.0" height="1.600" fill="#a83a3a" opacity="0.55"/><rect x="11.0" y="94.6" width="2.0" height="1.600" fill="#a83a3a" opacity="0.55"/><rect x="14.5" y="94.6" width="2.0" height="1.600" fill="#a83a3a" opacity="0.95"/><rect x="8.0" y="96.6" width="5.0" height="1.600" fill="#c25a5a" opacity="0.55"/><rect x="14.0" y="96.6" width="2.0" height="1.600" fill="#6a6ad8" opacity="0.85"/><rect x="16.6" y="96.6" width="1.4" height="1.600" fill="#6a6ad8" opacity="0.85"/><rect x="8.0" y="101.2" width="5.0" height="1.600" fill="#c25a5a" opacity="0.85"/><rect x="14.5" y="101.2" width="3.5" height="1.600" fill="#c25a5a" opacity="0.85"/><rect x="8.0" y="103.2" width="2.0" height="1.600" fill="#a83a3a" opacity="0.55"/><rect x="10.6" y="103.2" width="2.0" height="1.600" fill="#c25a5a" opacity="0.95"/><rect x="13.6" y="103.2" width="4.0" height="1.600" fill="#b64545" opacity="0.95"/><rect x="8.0" y="105.2" width="5.0" height="1.600" fill="#cf7a7a" opacity="0.85"/><rect x="14.0" y="105.2" width="3.0" height="1.600" fill="#a83a3a" opacity="0.7"/><rect x="6.0" y="109.8" width="4.0" height="1.600" fill="#a83a3a" opacity="0.55"/><rect x="11.0" y="109.8" width="2.0" height="1.600" fill="#b64545" opacity="0.85"/><rect x="14.5" y="109.8" width="3.0" height="1.600" fill="#b64545" opacity="0.55"/><rect x="8.0" y="111.8" width="5.0" height="1.600" fill="#a83a3a" opacity="0.7"/><rect x="14.0" y="111.8" width="2.0" height="1.600" fill="#cf7a7a" opacity="0.7"/><rect x="17.0" y="111.8" width="1.0" height="1.600" fill="#cf7a7a" opacity="0.55"/><rect x="8.0" y="113.8" width="3.0" height="1.600" fill="#a83a3a" opacity="0.85"/><rect x="12.0" y="113.8" width="2.0" height="1.600" fill="#a83a3a" opacity="0.7"/><rect x="15.0" y="113.8" width="3.0" height="1.600" fill="#b64545" opacity="0.85"/><rect x="8.0" y="115.8" width="2.0" height="1.600" fill="#cf7a7a" opacity="0.85"/><rect x="11.0" y="115.8" width="3.0" height="1.600" fill="#b64545" opacity="0.55"/><rect x="15.0" y="115.8" width="2.0" height="1.600" fill="#c25a5a" opacity="0.95"/><rect x="8.0" y="120.4" width="4.0" height="1.600" fill="#b64545" opacity="0.85"/><rect x="13.0" y="120.4" width="3.0" height="1.600" fill="#b64545" opacity="0.7"/><rect x="8.0" y="122.4" width="3.0" height="1.600" fill="#cf7a7a" opacity="0.7"/><rect x="12.0" y="122.4" width="5.0" height="1.600" fill="#c25a5a" opacity="0.55"/><rect x="8.0" y="124.4" width="5.0" height="1.600" fill="#c25a5a" opacity="0.55"/><rect x="14.0" y="124.4" width="2.0" height="1.600" fill="#b64545" opacity="0.55"/><rect x="17.0" y="124.4" width="1.0" height="1.600" fill="#b64545" opacity="0.95"/><rect x="6.0" y="126.4" width="5.0" height="1.600" fill="#b64545" opacity="0.55"/><rect x="12.0" y="126.4" width="4.0" height="1.600" fill="#a83a3a" opacity="0.55"/><rect x="6.0" y="131.0" width="2.0" height="1.600" fill="#b64545" opacity="0.55"/><rect x="9.5" y="131.0" width="3.0" height="1.600" fill="#b64545" opacity="0.85"/><rect x="13.5" y="131.0" width="3.0" height="1.600" fill="#c25a5a" opacity="0.95"/><rect x="8.0" y="133.0" width="4.0" height="1.600" fill="#b64545" opacity="0.95"/><rect x="13.0" y="133.0" width="2.0" height="1.600" fill="#c25a5a" opacity="0.55"/><rect x="16.0" y="133.0" width="2.0" height="1.600" fill="#a83a3a" opacity="0.85"/><rect x="8.0" y="135.0" width="2.0" height="1.600" fill="#cf7a7a" opacity="0.55"/><rect x="11.5" y="135.0" width="3.0" height="1.600" fill="#b64545" opacity="0.7"/><rect x="16.0" y="135.0" width="2.0" height="1.600" fill="#a83a3a" opacity="0.95"/><rect x="8.0" y="139.6" width="4.0" height="1.600" fill="#b64545" opacity="0.7"/><rect x="13.0" y="139.6" width="2.0" height="1.600" fill="#cf7a7a" opacity="0.55"/><rect x="16.0" y="139.6" width="2.0" height="1.600" fill="#b64545" opacity="0.95"/><rect x="8.0" y="141.6" width="4.0" height="1.600" fill="#c25a5a" opacity="0.7"/><rect x="12.6" y="141.6" width="5.0" height="1.600" fill="#6a6ad8" opacity="0.7"/><rect x="8.0" y="146.2" width="3.0" height="1.600" fill="#c25a5a" opacity="0.85"/><rect x="11.6" y="146.2" width="3.0" height="1.600" fill="#c25a5a" opacity="0.95"/><rect x="16.1" y="146.2" width="1.9" height="1.600" fill="#b64545" opacity="0.7"/><rect x="8.0" y="148.2" width="4.0" height="1.600" fill="#cf7a7a" opacity="0.95"/><rect x="13.0" y="148.2" width="3.0" height="1.600" fill="#cf7a7a" opacity="0.85"/><rect x="8.0" y="150.2" width="3.0" height="1.600" fill="#b64545" opacity="0.85"/><rect x="11.6" y="150.2" width="3.0" height="1.600" fill="#a83a3a" opacity="0.95"/><rect x="15.2" y="150.2" width="2.8" height="1.600" fill="#b64545" opacity="0.85"/><rect x="8.0" y="152.2" width="3.0" height="1.600" fill="#b64545" opacity="0.95"/><rect x="12.5" y="152.2" width="5.0" height="1.600" fill="#b64545" opacity="0.85"/><rect x="6.0" y="156.8" width="3.0" height="1.600" fill="#b64545" opacity="0.85"/><rect x="9.6" y="156.8" width="2.0" height="1.600" fill="#a83a3a" opacity="0.7"/><rect x="12.6" y="156.8" width="3.0" height="1.600" fill="#cf7a7a" opacity="0.85"/><rect x="16.6" y="156.8" width="1.4" height="1.600" fill="#cf7a7a" opacity="0.55"/><rect x="8.0" y="158.8" width="5.0" height="1.600" fill="#c25a5a" opacity="0.55"/><rect x="13.6" y="158.8" width="4.0" height="1.600" fill="#8585e0" opacity="0.7"/><rect x="8.0" y="160.8" width="4.0" height="1.600" fill="#b64545" opacity="0.7"/><rect x="13.0" y="160.8" width="4.0" height="1.600" fill="#8585e0" opacity="0.85"/><rect x="6.0" y="165.4" width="3.0" height="1.600" fill="#a83a3a" opacity="0.85"/><rect x="10.5" y="165.4" width="3.0" height="1.600" fill="#a83a3a" opacity="0.95"/><rect x="15.0" y="165.4" width="2.0" height="1.600" fill="#c25a5a" opacity="0.7"/><rect x="8.0" y="167.4" width="3.0" height="1.600" fill="#cf7a7a" opacity="0.7"/><rect x="12.5" y="167.4" width="3.0" height="1.600" fill="#cf7a7a" opacity="0.95"/><rect x="16.5" y="167.4" width="1.5" height="1.600" fill="#c25a5a" opacity="0.7"/><rect x="8.0" y="169.4" width="3.0" height="1.600" fill="#a83a3a" opacity="0.55"/><rect x="12.0" y="169.4" width="3.0" height="1.600" fill="#a83a3a" opacity="0.85"/><rect x="16.0" y="169.4" width="2.0" height="1.600" fill="#cf7a7a" opacity="0.95"/><rect x="6.0" y="171.4" width="5.0" height="1.600" fill="#c25a5a" opacity="0.95"/><rect x="12.0" y="171.4" width="3.0" height="1.600" fill="#b64545" opacity="0.95"/><rect x="16.0" y="171.4" width="2.0" height="1.600" fill="#a83a3a" opacity="0.7"/><rect x="4.0" y="176.0" width="2.0" height="1.600" fill="#a83a3a" opacity="0.7"/><rect x="7.5" y="176.0" width="4.0" height="1.600" fill="#cf7a7a" opacity="0.95"/><rect x="12.5" y="176.0" width="2.0" height="1.600" fill="#c25a5a" opacity="0.55"/><rect x="16.0" y="176.0" width="2.0" height="1.600" fill="#cf7a7a" opacity="0.55"/><rect x="6.0" y="178.0" width="4.0" height="1.600" fill="#cf7a7a" opacity="0.95"/><rect x="11.0" y="178.0" width="2.0" height="1.600" fill="#c25a5a" opacity="0.7"/><rect x="14.0" y="178.0" width="4.0" height="1.600" fill="#b64545" opacity="0.95"/><rect x="6.0" y="180.0" width="5.0" height="1.600" fill="#b64545" opacity="0.55"/><rect x="12.0" y="180.0" width="3.0" height="1.600" fill="#b64545" opacity="0.85"/><rect x="16.0" y="180.0" width="2.0" height="1.600" fill="#cf7a7a" opacity="0.55"/><rect x="6.0" y="182.0" width="2.0" height="1.600" fill="#a83a3a" opacity="0.7"/><rect x="9.5" y="182.0" width="3.0" height="1.600" fill="#c25a5a" opacity="0.55"/><rect x="13.1" y="182.0" width="4.9" height="1.600" fill="#a83a3a" opacity="0.95"/><rect x="6.0" y="186.6" width="3.0" height="1.600" fill="#c25a5a" opacity="0.95"/><rect x="10.0" y="186.6" width="5.0" height="1.600" fill="#c25a5a" opacity="0.55"/><rect x="16.5" y="186.6" width="1.5" height="1.600" fill="#b64545" opacity="0.55"/><rect x="8.0" y="188.6" width="4.0" height="1.600" fill="#cf7a7a" opacity="0.55"/><rect x="13.0" y="188.6" width="3.0" height="1.600" fill="#cf7a7a" opacity="0.85"/><rect x="17.0" y="188.6" width="1.0" height="1.600" fill="#b64545" opacity="0.85"/><rect x="8.0" y="193.2" width="3.0" height="1.600" fill="#cf7a7a" opacity="0.7"/><rect x="11.6" y="193.2" width="3.0" height="1.600" fill="#b64545" opacity="0.7"/><rect x="16.1" y="193.2" width="1.9" height="1.600" fill="#a83a3a" opacity="0.7"/><rect x="8.0" y="195.2" width="4.0" height="1.600" fill="#c25a5a" opacity="0.85"/><rect x="13.0" y="195.2" width="2.0" height="1.600" fill="#8585e0" opacity="0.7"/><rect x="16.0" y="195.2" width="2.0" height="1.600" fill="#8585e0" opacity="0.55"/><rect x="8.0" y="199.8" width="4.0" height="1.600" fill="#b64545" opacity="0.7"/><rect x="12.6" y="199.8" width="5.0" height="1.600" fill="#c25a5a" opacity="0.95"/><rect x="8.0" y="201.8" width="2.0" height="1.600" fill="#c25a5a" opacity="0.95"/><rect x="11.5" y="201.8" width="3.0" height="1.600" fill="#b64545" opacity="0.55"/><rect x="15.5" y="201.8" width="2.5" height="1.600" fill="#c25a5a" opacity="0.7"/><rect x="8.0" y="203.8" width="2.0" height="1.600" fill="#a83a3a" opacity="0.95"/><rect x="11.0" y="203.8" width="3.0" height="1.600" fill="#cf7a7a" opacity="0.7"/><rect x="14.6" y="203.8" width="2.0" height="1.600" fill="#b64545" opacity="0.85"/><rect x="17.2" y="203.8" width="0.8" height="1.600" fill="#cf7a7a" opacity="0.55"/><rect x="8.0" y="205.8" width="4.0" height="1.600" fill="#a83a3a" opacity="0.85"/><rect x="13.5" y="205.8" width="2.0" height="1.600" fill="#b64545" opacity="0.95"/><rect x="16.5" y="205.8" width="1.5" height="1.600" fill="#cf7a7a" opacity="0.7"/><rect x="8.0" y="210.4" width="3.0" height="1.600" fill="#cf7a7a" opacity="0.55"/><rect x="12.5" y="210.4" width="3.0" height="1.600" fill="#cf7a7a" opacity="0.55"/><rect x="17.0" y="210.4" width="1.0" height="1.600" fill="#cf7a7a" opacity="0.55"/><rect x="8.0" y="212.4" width="3.0" height="1.600" fill="#c25a5a" opacity="0.55"/><rect x="12.0" y="212.4" width="3.0" height="1.600" fill="#a83a3a" opacity="0.85"/><rect x="15.6" y="212.4" width="2.4" height="1.600" fill="#a83a3a" opacity="0.85"/><rect x="8.0" y="214.4" width="2.0" height="1.600" fill="#b64545" opacity="0.55"/><rect x="11.0" y="214.4" width="2.0" height="1.600" fill="#cf7a7a" opacity="0.95"/><rect x="14.5" y="214.4" width="3.0" height="1.600" fill="#cf7a7a" opacity="0.95"/><rect x="6.0" y="219.0" width="4.0" height="1.600" fill="#c25a5a" opacity="0.55"/><rect x="11.0" y="219.0" width="3.0" height="1.600" fill="#c25a5a" opacity="0.85"/><rect x="15.0" y="219.0" width="3.0" height="1.600" fill="#a83a3a" opacity="0.55"/><rect x="8.0" y="221.0" width="4.0" height="1.600" fill="#c25a5a" opacity="0.7"/><rect x="13.5" y="221.0" width="2.0" height="1.600" fill="#b64545" opacity="0.95"/><rect x="16.5" y="221.0" width="1.5" height="1.600" fill="#cf7a7a" opacity="0.55"/><rect x="8.0" y="223.0" width="3.0" height="1.600" fill="#b64545" opacity="0.7"/><rect x="11.6" y="223.0" width="4.0" height="1.600" fill="#cf7a7a" opacity="0.95"/><rect x="16.6" y="223.0" width="1.4" height="1.600" fill="#c25a5a" opacity="0.95"/><rect x="0" y="229" width="3" height="1" fill="#999"/><rect x="1" y="234" width="12" height="1.200" fill="#8a8a8a" opacity=".7"/></svg>
<div class="a" style="left:724px;top:345px;width:9.5px;height:28px;background:repeating-linear-gradient(to bottom,rgba(200,96,96,.6) 0,rgba(200,96,96,.6) 1px,rgba(210,125,125,.36) 1px,rgba(210,125,125,.36) 2px);"></div>
<div class="a" style="left:726.5px;top:349px;width:1.5px;height:22px;background:rgba(255,255,255,.35);"></div>
<div class="a" style="left:730px;top:352px;width:1.2px;height:6px;background:rgba(255,255,255,.5);"></div>
<div class="a" style="left:720px;top:342px;width:1.5px;height:2px;background:#b9b9b9;"></div>
<div class="a" style="left:724px;top:377px;width:9.5px;height:28px;background:repeating-linear-gradient(to bottom,rgba(200,96,96,.6) 0,rgba(200,96,96,.6) 1px,rgba(210,125,125,.36) 1px,rgba(210,125,125,.36) 2px);"></div>
<div class="a" style="left:726.5px;top:381px;width:1.5px;height:22px;background:rgba(255,255,255,.35);"></div>
<div class="a" style="left:730px;top:384px;width:1.2px;height:6px;background:rgba(255,255,255,.5);"></div>
<div class="a" style="left:720px;top:374px;width:1.5px;height:2px;background:#b9b9b9;"></div>
<div class="a" style="left:724px;top:409px;width:9.5px;height:28px;background:repeating-linear-gradient(to bottom,rgba(200,96,96,.6) 0,rgba(200,96,96,.6) 1px,rgba(210,125,125,.36) 1px,rgba(210,125,125,.36) 2px);"></div>
<div class="a" style="left:726.5px;top:413px;width:1.5px;height:22px;background:rgba(255,255,255,.35);"></div>
<div class="a" style="left:730px;top:416px;width:1.2px;height:6px;background:rgba(255,255,255,.5);"></div>
<div class="a" style="left:720px;top:406px;width:1.5px;height:2px;background:#b9b9b9;"></div>
<div class="a" style="left:724px;top:441px;width:9.5px;height:28px;background:repeating-linear-gradient(to bottom,rgba(200,96,96,.6) 0,rgba(200,96,96,.6) 1px,rgba(210,125,125,.36) 1px,rgba(210,125,125,.36) 2px);"></div>
<div class="a" style="left:726.5px;top:445px;width:1.5px;height:22px;background:rgba(255,255,255,.35);"></div>
<div class="a" style="left:730px;top:448px;width:1.2px;height:6px;background:rgba(255,255,255,.5);"></div>
<div class="a" style="left:720px;top:438px;width:1.5px;height:2px;background:#b9b9b9;"></div>
<div class="a" style="left:724px;top:473px;width:9.5px;height:28px;background:repeating-linear-gradient(to bottom,rgba(200,96,96,.6) 0,rgba(200,96,96,.6) 1px,rgba(210,125,125,.36) 1px,rgba(210,125,125,.36) 2px);"></div>
<div class="a" style="left:726.5px;top:477px;width:1.5px;height:22px;background:rgba(255,255,255,.35);"></div>
<div class="a" style="left:730px;top:480px;width:1.2px;height:6px;background:rgba(255,255,255,.5);"></div>
<div class="a" style="left:720px;top:470px;width:1.5px;height:2px;background:#b9b9b9;"></div>
<div class="a" style="left:724px;top:505px;width:9.5px;height:28px;background:repeating-linear-gradient(to bottom,rgba(200,96,96,.6) 0,rgba(200,96,96,.6) 1px,rgba(210,125,125,.36) 1px,rgba(210,125,125,.36) 2px);"></div>
<div class="a" style="left:726.5px;top:509px;width:1.5px;height:22px;background:rgba(255,255,255,.35);"></div>
<div class="a" style="left:730px;top:512px;width:1.2px;height:6px;background:rgba(255,255,255,.5);"></div>
<div class="a" style="left:720px;top:502px;width:1.5px;height:2px;background:#b9b9b9;"></div>
<div class="a" style="left:724px;top:537px;width:9.5px;height:28px;background:repeating-linear-gradient(to bottom,rgba(200,96,96,.6) 0,rgba(200,96,96,.6) 1px,rgba(210,125,125,.36) 1px,rgba(210,125,125,.36) 2px);"></div>
<div class="a" style="left:726.5px;top:541px;width:1.5px;height:22px;background:rgba(255,255,255,.35);"></div>
<div class="a" style="left:730px;top:544px;width:1.2px;height:6px;background:rgba(255,255,255,.5);"></div>
<div class="a" style="left:720px;top:534px;width:1.5px;height:2px;background:#b9b9b9;"></div>
<div class="a" style="left:724px;top:569px;width:9.5px;height:28px;background:repeating-linear-gradient(to bottom,rgba(200,96,96,.6) 0,rgba(200,96,96,.6) 1px,rgba(210,125,125,.36) 1px,rgba(210,125,125,.36) 2px);"></div>
<div class="a" style="left:726.5px;top:573px;width:1.5px;height:22px;background:rgba(255,255,255,.35);"></div>
<div class="a" style="left:730px;top:576px;width:1.2px;height:6px;background:rgba(255,255,255,.5);"></div>
<div class="a" style="left:720px;top:566px;width:1.5px;height:2px;background:#b9b9b9;"></div>
<div class="a" style="left:724px;top:601px;width:9.5px;height:28px;background:repeating-linear-gradient(to bottom,rgba(200,96,96,.6) 0,rgba(200,96,96,.6) 1px,rgba(210,125,125,.36) 1px,rgba(210,125,125,.36) 2px);"></div>
<div class="a" style="left:726.5px;top:605px;width:1.5px;height:22px;background:rgba(255,255,255,.35);"></div>
<div class="a" style="left:730px;top:608px;width:1.2px;height:6px;background:rgba(255,255,255,.5);"></div>
<div class="a" style="left:720px;top:598px;width:1.5px;height:2px;background:#b9b9b9;"></div>
<div class="a" style="left:724px;top:633px;width:9.5px;height:28px;background:repeating-linear-gradient(to bottom,rgba(200,96,96,.6) 0,rgba(200,96,96,.6) 1px,rgba(210,125,125,.36) 1px,rgba(210,125,125,.36) 2px);"></div>
<div class="a" style="left:726.5px;top:637px;width:1.5px;height:22px;background:rgba(255,255,255,.35);"></div>
<div class="a" style="left:730px;top:640px;width:1.2px;height:6px;background:rgba(255,255,255,.5);"></div>
<div class="a" style="left:720px;top:630px;width:1.5px;height:2px;background:#b9b9b9;"></div>
<div class="a" style="left:724px;top:665px;width:9.5px;height:28px;background:repeating-linear-gradient(to bottom,rgba(200,96,96,.6) 0,rgba(200,96,96,.6) 1px,rgba(210,125,125,.36) 1px,rgba(210,125,125,.36) 2px);"></div>
<div class="a" style="left:726.5px;top:669px;width:1.5px;height:22px;background:rgba(255,255,255,.35);"></div>
<div class="a" style="left:730px;top:672px;width:1.2px;height:6px;background:rgba(255,255,255,.5);"></div>
<div class="a" style="left:720px;top:662px;width:1.5px;height:2px;background:#b9b9b9;"></div>
<div class="a" style="left:724px;top:697px;width:9.5px;height:28px;background:repeating-linear-gradient(to bottom,rgba(200,96,96,.6) 0,rgba(200,96,96,.6) 1px,rgba(210,125,125,.36) 1px,rgba(210,125,125,.36) 2px);"></div>
<div class="a" style="left:726.5px;top:701px;width:1.5px;height:22px;background:rgba(255,255,255,.35);"></div>
<div class="a" style="left:730px;top:704px;width:1.2px;height:6px;background:rgba(255,255,255,.5);"></div>
<div class="a" style="left:720px;top:694px;width:1.5px;height:2px;background:#b9b9b9;"></div>
<div class="a" style="left:724px;top:729px;width:9.5px;height:28px;background:repeating-linear-gradient(to bottom,rgba(200,96,96,.6) 0,rgba(200,96,96,.6) 1px,rgba(210,125,125,.36) 1px,rgba(210,125,125,.36) 2px);"></div>
<div class="a" style="left:726.5px;top:733px;width:1.5px;height:22px;background:rgba(255,255,255,.35);"></div>
<div class="a" style="left:730px;top:736px;width:1.2px;height:6px;background:rgba(255,255,255,.5);"></div>
<div class="a" style="left:720px;top:726px;width:1.5px;height:2px;background:#b9b9b9;"></div>
<div class="a" style="left:724px;top:761px;width:9.5px;height:28px;background:repeating-linear-gradient(to bottom,rgba(200,96,96,.6) 0,rgba(200,96,96,.6) 1px,rgba(210,125,125,.36) 1px,rgba(210,125,125,.36) 2px);"></div>
<div class="a" style="left:726.5px;top:765px;width:1.5px;height:22px;background:rgba(255,255,255,.35);"></div>
<div class="a" style="left:730px;top:768px;width:1.2px;height:6px;background:rgba(255,255,255,.5);"></div>
<div class="a" style="left:720px;top:758px;width:1.5px;height:2px;background:#b9b9b9;"></div>
<div class="a" style="left:724px;top:793px;width:9.5px;height:28px;background:repeating-linear-gradient(to bottom,rgba(200,96,96,.6) 0,rgba(200,96,96,.6) 1px,rgba(210,125,125,.36) 1px,rgba(210,125,125,.36) 2px);"></div>
<div class="a" style="left:726.5px;top:797px;width:1.5px;height:22px;background:rgba(255,255,255,.35);"></div>
<div class="a" style="left:730px;top:800px;width:1.2px;height:6px;background:rgba(255,255,255,.5);"></div>
<div class="a" style="left:720px;top:790px;width:1.5px;height:2px;background:#b9b9b9;"></div>
<div class="a" style="left:724px;top:825px;width:9.5px;height:28px;background:repeating-linear-gradient(to bottom,rgba(200,96,96,.6) 0,rgba(200,96,96,.6) 1px,rgba(210,125,125,.36) 1px,rgba(210,125,125,.36) 2px);"></div>
<div class="a" style="left:726.5px;top:829px;width:1.5px;height:22px;background:rgba(255,255,255,.35);"></div>
<div class="a" style="left:730px;top:832px;width:1.2px;height:6px;background:rgba(255,255,255,.5);"></div>
<div class="a" style="left:720px;top:822px;width:1.5px;height:2px;background:#b9b9b9;"></div>
<div class="a" style="left:724px;top:857px;width:9.5px;height:28px;background:repeating-linear-gradient(to bottom,rgba(200,96,96,.6) 0,rgba(200,96,96,.6) 1px,rgba(210,125,125,.36) 1px,rgba(210,125,125,.36) 2px);"></div>
<div class="a" style="left:726.5px;top:861px;width:1.5px;height:22px;background:rgba(255,255,255,.35);"></div>
<div class="a" style="left:730px;top:864px;width:1.2px;height:6px;background:rgba(255,255,255,.5);"></div>
<div class="a" style="left:720px;top:854px;width:1.5px;height:2px;background:#b9b9b9;"></div>
<div class="a" style="left:724px;top:889px;width:9.5px;height:28px;background:repeating-linear-gradient(to bottom,rgba(200,96,96,.6) 0,rgba(200,96,96,.6) 1px,rgba(210,125,125,.36) 1px,rgba(210,125,125,.36) 2px);"></div>
<div class="a" style="left:726.5px;top:893px;width:1.5px;height:22px;background:rgba(255,255,255,.35);"></div>
<div class="a" style="left:730px;top:896px;width:1.2px;height:6px;background:rgba(255,255,255,.5);"></div>
<div class="a" style="left:720px;top:886px;width:1.5px;height:2px;background:#b9b9b9;"></div>
<div class="a" style="left:724px;top:921px;width:9.5px;height:28px;background:repeating-linear-gradient(to bottom,rgba(200,96,96,.6) 0,rgba(200,96,96,.6) 1px,rgba(210,125,125,.36) 1px,rgba(210,125,125,.36) 2px);"></div>
<div class="a" style="left:726.5px;top:925px;width:1.5px;height:22px;background:rgba(255,255,255,.35);"></div>
<div class="a" style="left:730px;top:928px;width:1.2px;height:6px;background:rgba(255,255,255,.5);"></div>
<div class="a" style="left:720px;top:918px;width:1.5px;height:2px;background:#b9b9b9;"></div>
<div class="a" style="left:724px;top:953px;width:9.5px;height:28px;background:repeating-linear-gradient(to bottom,rgba(200,96,96,.6) 0,rgba(200,96,96,.6) 1px,rgba(210,125,125,.36) 1px,rgba(210,125,125,.36) 2px);"></div>
<div class="a" style="left:726.5px;top:957px;width:1.5px;height:22px;background:rgba(255,255,255,.35);"></div>
<div class="a" style="left:730px;top:960px;width:1.2px;height:6px;background:rgba(255,255,255,.5);"></div>
<div class="a" style="left:720px;top:950px;width:1.5px;height:2px;background:#b9b9b9;"></div>
<div class="a" style="left:724px;top:985px;width:9.5px;height:1px;background:repeating-linear-gradient(to bottom,rgba(200,96,96,.6) 0,rgba(200,96,96,.6) 1px,rgba(210,125,125,.36) 1px,rgba(210,125,125,.36) 2px);"></div>
<div class="a" style="left:726.5px;top:989px;width:1.5px;height:1px;background:rgba(255,255,255,.35);"></div>
<div class="a" style="left:730px;top:992px;width:1.2px;height:6px;background:rgba(255,255,255,.5);"></div>
<div class="a" style="left:720px;top:982px;width:1.5px;height:2px;background:#b9b9b9;"></div>
<svg class="a" style="left:719px;top:988px;" width="16" height="14" viewBox="0 0 16 14" fill="none" stroke="none" stroke-width="0" stroke-linecap="round" stroke-linejoin="round"><rect x="2" y="1" width="12" height="1.300" fill="#9a9a9a"/><rect x="2" y="3" width="11" height="1.300" fill="#a8a8b8"/><rect x="2" y="5" width="5" height="1.300" fill="#b38ad0"/><rect x="8" y="5" width="6" height="1.300" fill="#9a9a9a"/><rect x="5" y="7" width="9" height="1.300" fill="#a8a8a8"/><rect x="0" y="11" width="9" height="1" fill="#c9a0c0"/><rect x="9" y="11" width="6" height="1.200" fill="#d06a8a"/></svg>
<div class="a" style="left:560px;top:948.5px;width:190.5px;height:39px;background:#f5f5f5;border-top:1px solid #c6c6c6;border-bottom:1px solid #c6c6c6;"></div>
<div class="a" style="left:674.5px;top:949px;width:1px;height:38px;background:#c6c6c6;"></div>
<span class="t" id="t96" style="left:573px;top:958.67px;font-size:16.25px;color:#3b3b3b;letter-spacing:-0.054px;">3 edited files</span>
<div class="a" style="left:685px;top:955px;width:63.500px;height:28px;overflow:hidden"><span class="t" style="left:0.300px;top:4.100px;font-size:16.250px;color:#3b3b3b;letter-spacing:-0.950px">002_ENAMEL_STADIUM.txt</span></div>
<div class="a" style="left:751px;top:44px;width:1169px;height:959px;background:#fafafa;"></div>
<div class="a" style="left:751px;top:81px;width:1169px;height:700px;overflow:hidden"><div class="a" style="left:-751px;top:-81px;width:1920px;height:1080px">
<div class="a" style="left:772px;top:40px;width:1115px;height:729px;border:1px solid #e3e3e3;border-radius:9px;"></div>
<span class="t" id="t97" style="left:782.5px;top:67.87px;font-size:16.25px;color:#3b3b3b;letter-spacing:-0.014px;">Wrote a script to bulk generate 20 variations of the prompt based on the user's preference of having 3 teeth (2 healthy, 1 decayed) across various</span>
<span class="t" id="t98" style="left:782.5px;top:93.87px;font-size:16.25px;color:#3b3b3b;letter-spacing:-0.193px;">locations and camera angles.</span>
<div class="a" style="left:773px;top:126px;width:1113px;height:1px;background:#e3e3e3;"></div>
<span class="t" id="t99" style="left:782.5px;top:138.87px;font-size:16.25px;color:#9b9b9b;letter-spacing:-0.409px;">Files Edited</span>
<svg class="a" style="left:788px;top:169.5px;" width="15" height="18" viewBox="0 0 14 19.500" fill="none" stroke="#4a4a4a" stroke-width="1.3" stroke-linecap="round" stroke-linejoin="round"><path d="M2 1.5h6.5L13 6v11.3a1.2 1.2 0 0 1-1.2 1.200H3.200A1.2 1.2 0 0 1 2 17.300V2.700A1.2 1.2 0 0 1 3.200 1.500z" transform="translate(-0.5,-0.5)"/><path d="M8 1v5h4.500"/></svg>
<span class="t" id="t100" style="left:807.5px;top:168.37px;font-size:16.25px;color:#3b3b3b;-webkit-text-stroke:.550px #3b3b3b;letter-spacing:-0.369px;">002_ENAMEL_STADIUM.txt</span>
<svg class="a" style="left:1019px;top:171px;" width="17" height="15" viewBox="0 0 17 15" fill="none" stroke="#2aa592" stroke-width="1.7" stroke-linecap="round" stroke-linejoin="round"><path d="M2 2l5.500 5L2 12"/><path d="M9 13h6.500"/></svg>
<span class="t" id="t101" style="left:1040.5px;top:168.37px;font-size:16.25px;color:#3b3b3b;-webkit-text-stroke:.550px #3b3b3b;letter-spacing:-0.030px;">generate_prompts.ps1</span>
<svg class="a" style="left:1216.5px;top:169.5px;" width="17.5" height="17.5" viewBox="0 0 16 16" fill="#26a69a" stroke="none" stroke-width="0" stroke-linecap="round" stroke-linejoin="round"><path d="M7.900.8C5.700.8 4.700 1.700 4.700 3v1.900h3.400v.7H3.300C1.900 5.600.8 6.700.8 8.400s1 2.800 2.400 2.800h1.500V9.300c0-1.300 1.100-2.400 2.400-2.400h3.300c1.100 0 1.900-.9 1.900-2V3c0-1.200-1.200-2.200-3-2.200zM6.200 2.100a.75.75 0 1 1 0 1.500.75.75 0 0 1 0-1.500z"/><path d="M8.100 15.200c2.200 0 3.200-.9 3.200-2.200v-1.900H7.900v-.7h4.800c1.400 0 2.500-1.100 2.500-2.800s-1-2.800-2.400-2.800h-1.500v1.900c0 1.300-1.100 2.400-2.400 2.400H5.600c-1.100 0-1.900.9-1.900 2V13c0 1.200 1.200 2.200 3 2.200zM9.800 13.900a.75.750 0 1 1 0-1.500.750.750 0 0 1 0 1.500z"/></svg>
<span class="t" id="t102" style="left:1237.5px;top:168.37px;font-size:16.25px;color:#3b3b3b;-webkit-text-stroke:.550px #3b3b3b;letter-spacing:0.154px;">generate_prompts.py</span>
<div class="a" style="left:773px;top:199px;width:1113px;height:1px;background:#e3e3e3;"></div>
<span class="t" id="t103" style="left:782.5px;top:212.07px;font-size:16.25px;color:#9b9b9b;letter-spacing:-0.317px;">Progress Updates</span>
<span class="t" id="t104" style="left:1772px;top:212.07px;font-size:16.25px;color:#9b9b9b;letter-spacing:-0.335px;">Collapse all</span>
<svg class="a" style="left:1861px;top:218px;" width="12" height="9" viewBox="0 0 12 9" fill="none" stroke="#9b9b9b" stroke-width="1.3" stroke-linecap="round" stroke-linejoin="round"><path d="M1.500 1.500L6 6l4.500-4.500"/></svg>
<span class="t" id="t105" style="left:787.3px;top:247.50px;font-size:13px;color:#8c8c8c;">1</span>
<span class="t" id="t106" style="left:807.5px;top:247.07px;font-size:16.25px;color:#3b3b3b;-webkit-text-stroke:.550px #3b3b3b;letter-spacing:0.333px;">Writing a python script to automatically generate 20 variations of the video prompts in txt files</span>
<svg class="a" style="left:813px;top:290.2px;" width="9" height="12.6" viewBox="0 0 9 12.6" fill="none" stroke="#6b6b6b" stroke-width="1.4" stroke-linecap="round" stroke-linejoin="round"><path d="M2 1.500l4.800 4.800L2 11.100"/></svg>
<span class="t" id="t107" style="left:837.5px;top:285.87px;font-size:16.25px;color:#7b7b7b;letter-spacing:-0.290px;">Thought Process</span>
<svg class="a" style="left:808px;top:330px;" width="18" height="18" viewBox="0 0 18 18" fill="none" stroke="#8c8c8c" stroke-width="1.3" stroke-linecap="round" stroke-linejoin="round"><path d="M9.500 1.500a7.300 7.300 0 1 1-3.700 13.600L1.800 16.200l1.100-3.600A7.300 7.300 0 0 1 9.500 1.500z"/><path d="M7 6.300l5 5M12 6.300l-5 5"/></svg>
<span class="t" id="t108" style="left:837.5px;top:328.87px;font-size:16.25px;color:#3b3b3b;letter-spacing:0.076px;">The model's generation exceeded the maximum output token limit.</span>
<svg class="a" style="left:813px;top:375.2px;" width="9" height="12.6" viewBox="0 0 9 12.6" fill="none" stroke="#6b6b6b" stroke-width="1.4" stroke-linecap="round" stroke-linejoin="round"><path d="M2 1.500l4.800 4.800L2 11.100"/></svg>
<span class="t" id="t109" style="left:837.5px;top:372.37px;font-size:16.25px;color:#7b7b7b;letter-spacing:-0.055px;">Thought for 79s</span>
<svg class="a" style="left:809.5px;top:417px;" width="15" height="17" viewBox="0 0 14 19.500" fill="none" stroke="#8c8c8c" stroke-width="1.3" stroke-linecap="round" stroke-linejoin="round"><path d="M2 1.5h6.5L13 6v11.3a1.2 1.2 0 0 1-1.2 1.200H3.200A1.2 1.2 0 0 1 2 17.300V2.700A1.2 1.2 0 0 1 3.200 1.500z" transform="translate(-0.5,-0.5)"/><path d="M8 1v5h4.500"/></svg>
<span class="t" id="t110" style="left:837.5px;top:415.07px;font-size:16.25px;color:#3b3b3b;letter-spacing:-0.263px;">Edited</span>
<svg class="a" style="left:891.5px;top:416.5px;" width="17.5" height="17.5" viewBox="0 0 16 16" fill="#26a69a" stroke="none" stroke-width="0" stroke-linecap="round" stroke-linejoin="round"><path d="M7.900.8C5.700.8 4.700 1.700 4.700 3v1.900h3.400v.7H3.300C1.900 5.600.8 6.700.8 8.400s1 2.800 2.400 2.800h1.500V9.300c0-1.300 1.100-2.400 2.400-2.400h3.300c1.100 0 1.900-.9 1.900-2V3c0-1.200-1.200-2.200-3-2.200zM6.200 2.100a.75.75 0 1 1 0 1.500.75.75 0 0 1 0-1.500z"/><path d="M8.100 15.200c2.200 0 3.200-.9 3.200-2.200v-1.900H7.900v-.7h4.800c1.400 0 2.500-1.100 2.500-2.800s-1-2.800-2.400-2.800h-1.500v1.900c0 1.300-1.100 2.400-2.400 2.400H5.600c-1.100 0-1.900.9-1.900 2V13c0 1.200 1.200 2.200 3 2.200zM9.800 13.900a.75.750 0 1 1 0-1.500.750.750 0 0 1 0 1.500z"/></svg>
<span class="t" id="t111" style="left:912.5px;top:415.07px;font-size:16.25px;color:#3b3b3b;-webkit-text-stroke:.550px #3b3b3b;letter-spacing:0.154px;">generate_prompts.py</span>
<span class="t" id="t112" style="left:1085.5px;top:415.15px;font-size:14px;color:#3d8b40;letter-spacing:-0.262px;">+483</span>
<span class="t" id="t113" style="left:1122.5px;top:415.15px;font-size:14px;color:#c4303a;letter-spacing:-0.227px;">-0</span>
<svg class="a" style="left:1848px;top:416.5px;" width="14" height="17" viewBox="0 0 14 17" fill="none" stroke="#6b6b6b" stroke-width="1.2" stroke-linecap="round" stroke-linejoin="round"><path d="M1.500 1.500h7l4 4v10H1.500z"/><path d="M7 6.500v4.500M4.800 8.800h4.400M4.800 13h4.400" stroke-width="1.100"/></svg>
<svg class="a" style="left:813px;top:461.7px;" width="9" height="12.6" viewBox="0 0 9 12.6" fill="none" stroke="#6b6b6b" stroke-width="1.4" stroke-linecap="round" stroke-linejoin="round"><path d="M2 1.500l4.800 4.800L2 11.100"/></svg>
<span class="t" id="t114" style="left:837.5px;top:458.07px;font-size:16.25px;color:#7b7b7b;">Thought for 3s</span>
<div class="a" style="left:1866px;top:245px;width:8px;height:190px;background:#b9b9b9;border-radius:4px;"></div>
<span class="t" id="t115" style="left:786.3px;top:508.50px;font-size:13px;color:#8c8c8c;">2</span>
<span class="t" id="t116" style="left:807.5px;top:507.87px;font-size:16.25px;color:#3b3b3b;-webkit-text-stroke:.550px #3b3b3b;letter-spacing:0.240px;">Executing script to generate 20 prompt text files</span>
<div class="a" style="left:800px;top:540px;width:1080px;height:218px;overflow:hidden"><div class="a" style="left:-800px;top:-540px;width:1920px;height:1080px">
<div class="a" style="left:807px;top:546.5px;width:1057px;height:260px;border:1px solid #e3e3e3;border-radius:9px;"></div>
<div class="a" style="left:808px;top:579px;width:1055px;height:1px;background:#e3e3e3;"></div>
</div></div>
<span class="t" id="t117" style="left:818.5px;top:554.37px;font-size:16.25px;color:#8c8c8c;letter-spacing:-0.290px;">Ran command</span>
<span class="t m" id="t118" style="left:818px;top:592.23px;font-size:14.9px;color:#2b2b2b;"><span style="color:#a3a3a3">…\prom vdo ai tx &gt; </span>python generate_prompts.py</span>
<svg class="a" style="left:1833px;top:595px;" width="16" height="16" viewBox="0 0 16 16" fill="none" stroke="#8c8c8c" stroke-width="1.3" stroke-linecap="round" stroke-linejoin="round"><rect x="5" y="5" width="9.500" height="9.500" rx="1.800"/><path d="M2.500 11V3.300A1.800 1.800 0 0 1 4.300 1.500H11"/></svg>
<span class="t m" id="t119" style="left:818px;top:627.23px;font-size:14.9px;color:#2b2b2b;">python : The term 'python' is not recognized as the name of a cmdlet, function, script file, or operable program.</span>
<span class="t m" id="t120" style="left:818px;top:650.13px;font-size:14.9px;color:#2b2b2b;">Check the spelling of the name, or if a path was included, verify that the path is correct and try again.</span>
<span class="t m" id="t121" style="left:818px;top:673.03px;font-size:14.9px;color:#2b2b2b;">At line:1 char:1</span>
<span class="t m" id="t122" style="left:818px;top:695.93px;font-size:14.9px;color:#2b2b2b;">+ python generate_prompts.py</span>
<span class="t m" id="t123" style="left:818px;top:718.83px;font-size:14.9px;color:#2b2b2b;">+ ~~~~~~</span>
<span class="t m" id="t124" style="left:818px;top:740.53px;font-size:14.9px;color:#2b2b2b;">    + CategoryInfo          : ObjectNotFound: (python:String) [], CommandNotFoundException</span>
</div></div>
<div class="a" style="left:751px;top:44px;width:1169px;height:37px;background:#fafafa;border-bottom:1px solid #e3e3e3;"></div>
<span class="t" id="t125" style="left:761px;top:53.37px;font-size:16.25px;color:#3b3b3b;letter-spacing:-0.017px;">Viewing AI Video Prompt File</span>
<svg class="a" style="left:1799px;top:54.5px;" width="16" height="16" viewBox="0 0 16 16" fill="none" stroke="#3b3b3b" stroke-width="1.4" stroke-linecap="round" stroke-linejoin="round"><path d="M8 1.500v13M1.500 8h13"/></svg>
<svg class="a" style="left:1826px;top:52px;" width="21" height="21" viewBox="0 0 21 21" fill="none" stroke="#3b3b3b" stroke-width="1.4" stroke-linecap="round" stroke-linejoin="round"><path d="M3.200 6.200a8.300 8.300 0 1 1-.900 4.600"/><path d="M2.300 2.300v4.200h4.200"/><path d="M10.800 5.800v5l3.300 2"/></svg>
<div class="a" style="left:1859.5px;top:61px;width:2.3px;height:2.3px;background:#3b3b3b;border-radius:50%;"></div>
<div class="a" style="left:1865.9px;top:61px;width:2.3px;height:2.3px;background:#3b3b3b;border-radius:50%;"></div>
<div class="a" style="left:1872.3px;top:61px;width:2.3px;height:2.3px;background:#3b3b3b;border-radius:50%;"></div>
<svg class="a" style="left:1889.5px;top:55px;" width="14" height="14" viewBox="0 0 14 14" fill="none" stroke="#3b3b3b" stroke-width="1.4" stroke-linecap="round" stroke-linejoin="round"><path d="M1.500 1.500l11 11M12.500 1.500l-11 11"/></svg>
<div class="a" style="left:1909px;top:714px;width:7.5px;height:144px;background:#c4c4c4;border-radius:4px;"></div>
<span class="t" id="t126" style="left:771px;top:790.87px;font-size:16.25px;color:#9b9b9b;letter-spacing:-0.315px;">Thinking...</span>
<div class="a" style="left:1882px;top:131px;width:40px;height:79px;background:#6e7596;border-radius:5px 0 0 5px;box-shadow:0 0 3px rgba(0,0,0,.25);"></div>
<svg class="a" style="left:1893.5px;top:140px;" width="19" height="22" viewBox="0 0 19 22" fill="none" stroke="none" stroke-width="0" stroke-linecap="round" stroke-linejoin="round"><path d="M9.500 1l8 2.800v6.700c0 5-3.500 8.600-8 10.500-4.500-1.900-8-5.500-8-10.500V3.800z" fill="#2dbd7a" stroke="#43d68f" stroke-width=".8"/><path d="M5.200 10.500l3.200 3.300 5.800-6.600" stroke="#12352a" stroke-width="2.200" fill="none"/></svg>
<span class="t sf" id="t127" style="left:1887.5px;top:169.09px;font-size:17.5px;color:#ffffff;font-weight:700;">44</span>
<span class="t" id="t128" style="left:1908px;top:171.21px;font-size:9.5px;color:#dfe2ee;font-weight:700;letter-spacing:0.547px;">%</span>
<div class="a" style="left:1887px;top:192.5px;width:30px;height:8.5px;background:#c3c8d8;border-radius:3px;"></div>
<div class="a" style="left:1887px;top:192.5px;width:17px;height:8.5px;background:#63d493;border-radius:3px 0 0 3px;"></div>
<svg class="a" style="left:781px;top:870px;" width="18" height="20" viewBox="0 0 18 20" fill="none" stroke="#8c8c8c" stroke-width="1.2" stroke-linecap="round" stroke-linejoin="round"><path d="M2 1.500h8l5 5v12H2z" transform="translate(0,0)"/><path d="M10 1.500v5h5"/></svg>
<div class="a" style="left:788.5px;top:879.5px;width:11px;height:11px;background:#0b5cbe;border-radius:50%;"></div>
<svg class="a" style="left:810.5px;top:871px;" width="17" height="17" viewBox="0 0 17 17" fill="none" stroke="#8c8c8c" stroke-width="1.2" stroke-linecap="round" stroke-linejoin="round"><rect x="1" y="1" width="15" height="15" rx="2"/><path d="M4.300 5l2.700 2.600-2.700 2.600M8.500 10.500h3.500" stroke-width="1.100"/></svg>
<svg class="a" style="left:838.5px;top:871px;" width="20" height="18" viewBox="0 0 20 18" fill="none" stroke="#8c8c8c" stroke-width="1.2" stroke-linecap="round" stroke-linejoin="round"><path d="M2 7.500L4.500 2.500h11L18 7.500v6.800a1.200 1.200 0 0 1-1.200 1.200H3.200A1.200 1.200 0 0 1 2 14.300z"/><path d="M2 7.500h5.200v1.700h5.600V7.500H18M2 11.300h16"/></svg>
<svg class="a" style="left:869.5px;top:870.5px;" width="19" height="19" viewBox="0 0 19 19" fill="none" stroke="#8c8c8c" stroke-width="1.2" stroke-linecap="round" stroke-linejoin="round"><circle cx="9.500" cy="9.500" r="8.500"/><circle cx="9.500" cy="9.500" r="3.400"/><path d="M9.500 6.100h7.800M6.600 11.200L2.700 4.500M12.400 11.200l-3.900 6.700" stroke-width="1.100"/></svg>
<div class="a" style="left:1740px;top:867.5px;width:143px;height:27px;background:#f0f0f0;border-radius:5px;"></div>
<svg class="a" style="left:1746px;top:872px;" width="18" height="16" viewBox="0 0 18 16" fill="none" stroke="#bdbdbd" stroke-width="1.3" stroke-linecap="round" stroke-linejoin="round"><path d="M1.500 3.500l1.800 1.800L6.300 2M1.500 10.500l1.800 1.800 3-3.300M9.500 3.500h7.500M9.500 8h7.500M9.500 12.500h7.500"/></svg>
<span class="t" id="t129" style="left:1772.5px;top:872.13px;font-size:15.5px;color:#a3a3a3;-webkit-text-stroke:.550px #a3a3a3;letter-spacing:-1.192px;">Review Changes</span>
<div class="a" style="left:761.5px;top:900.5px;width:1147px;height:92.5px;background:#e8ebee;border:1px solid #d6dce2;border-radius:11px;"></div>
<span class="t" id="t130" style="left:777px;top:918.07px;font-size:16.25px;color:#a3a8ae;letter-spacing:0.073px;">Ask anything, @ to mention, / for workflows</span>
<svg class="a" style="left:778px;top:963.5px;" width="13" height="13" viewBox="0 0 13 13" fill="none" stroke="#8c8c8c" stroke-width="1.3" stroke-linecap="round" stroke-linejoin="round"><path d="M6.500 1v11M1 6.500h11"/></svg>
<svg class="a" style="left:811px;top:966px;" width="12" height="8" viewBox="0 0 12 8" fill="none" stroke="#8c8c8c" stroke-width="1.2" stroke-linecap="round" stroke-linejoin="round"><path d="M1.500 6.500L6 2l4.500 4.500"/></svg>
<span class="t" id="t131" style="left:830px;top:960.98px;font-size:14.5px;color:#6b6b6b;letter-spacing:-0.555px;">Planning</span>
<svg class="a" style="left:901px;top:966px;" width="12" height="8" viewBox="0 0 12 8" fill="none" stroke="#8c8c8c" stroke-width="1.2" stroke-linecap="round" stroke-linejoin="round"><path d="M1.500 6.500L6 2l4.500 4.500"/></svg>
<span class="t" id="t132" style="left:920px;top:960.98px;font-size:14.5px;color:#6b6b6b;letter-spacing:-0.510px;">Gemini 3.1 Pro (High)</span>
<svg class="a" style="left:1842px;top:959px;" width="16" height="22" viewBox="0 0 16 22" fill="none" stroke="#3b3b3b" stroke-width="1.5" stroke-linecap="round" stroke-linejoin="round"><rect x="5" y="1.200" width="6" height="11.500" rx="3"/><path d="M2 9.500a6 6 0 0 0 12 0M8 15.500V20"/></svg>
<div class="a" style="left:1870.5px;top:955.5px;width:29px;height:29px;background:#d4d7db;border-radius:50%;"></div>
<div class="a" style="left:1879px;top:964px;width:12px;height:12px;background:#e5484d;border-radius:1px;"></div>
<div class="a" style="left:10px;top:860px;width:562px;height:133px;background:#ffffff;border-radius:6px;box-shadow:0 0 10px 2px rgba(0,0,0,.22);border:1px solid #e2e2e2;"></div>
<svg class="a" style="left:22px;top:876px;" width="21" height="21" viewBox="0 0 21 21" fill="none" stroke="#0a62c4" stroke-width="1.4" stroke-linecap="round" stroke-linejoin="round"><circle cx="10.500" cy="10.500" r="9.200"/><path d="M10.500 9.300v6" stroke-width="1.700"/><circle cx="10.500" cy="6" r="1.100" fill="#0a62c4" stroke="none"/></svg>
<span class="t" id="t133" style="left:49.3px;top:877.67px;font-size:16.25px;color:#3b3b3b;">Do you want to install the recommended 'PowerShell'</span>
<span class="t" id="t134" style="left:49.3px;top:904.37px;font-size:16.25px;color:#3b3b3b;letter-spacing:-0.111px;">extension from ms-vscode for the PowerShell language?</span>
<svg class="a" style="left:506px;top:877.5px;" width="18" height="18" viewBox="0 0 20 20" fill="none" stroke="#3b3b3b" stroke-width="1.4" stroke-linecap="round" stroke-linejoin="round"><path d="M16.44 8.54L18.68 8.56L18.68 11.44L16.44 11.46L15.58 13.52L17.16 15.12L15.12 17.16L13.52 15.58L11.46 16.44L11.44 18.68L8.56 18.68L8.54 16.44L6.48 15.58L4.88 17.16L2.84 15.12L4.42 13.52L3.56 11.46L1.32 11.44L1.32 8.56L3.56 8.54L4.42 6.48L2.84 4.88L4.88 2.84L6.48 4.42L8.54 3.56L8.56 1.32L11.44 1.32L11.46 3.56L13.52 4.42L15.12 2.84L17.16 4.88L15.58 6.48z"/><circle cx="10" cy="10" r="2.9"/></svg>
<svg class="a" style="left:541px;top:880px;" width="13" height="13" viewBox="0 0 13 13" fill="none" stroke="#3b3b3b" stroke-width="1.3" stroke-linecap="round" stroke-linejoin="round"><path d="M1.500 1.500l10 10M11.500 1.500l-10 10"/></svg>
<div class="a" style="left:291px;top:941px;width:66px;height:34px;background:#005fb8;border-radius:2.500px;"></div>
<span class="t" id="t135" style="left:305px;top:948.37px;font-size:16.25px;color:#ffffff;letter-spacing:-0.565px;">Install</span>
<div class="a" style="left:370px;top:941px;width:190px;height:34px;background:#e5e5e5;border:1px solid #cecece;border-radius:2.500px;"></div>
<span class="t" id="t136" style="left:383.3px;top:948.37px;font-size:16.25px;color:#3b3b3b;letter-spacing:-0.883px;">Show Recommendations</span>
<div class="a" style="left:0px;top:1003px;width:1920px;height:27px;background:#f8f8f8;border-top:1px solid #e5e5e5;"></div>
<div class="a" style="left:0px;top:1003px;width:49px;height:27px;background:#005fb8;"></div>
<svg class="a" style="left:20px;top:1008px;" width="18" height="17" viewBox="0 0 18 17" fill="none" stroke="#ffffff" stroke-width="1.5" stroke-linecap="round" stroke-linejoin="round"><path d="M3 6.200l4.600 4.300L3 14.800"/><path d="M15 2.200l-4.600 4.300L15 10.800"/></svg>
<svg class="a" style="left:60px;top:1008px;" width="18" height="18" viewBox="0 0 18 18" fill="none" stroke="#3b3b3b" stroke-width="1.2" stroke-linecap="round" stroke-linejoin="round"><circle cx="9" cy="9" r="7.800"/><path d="M6 6l6 6M12 6l-6 6"/></svg>
<span class="t" id="t137" style="left:83.5px;top:1006.80px;font-size:15px;color:#3b3b3b;letter-spacing:-1.344px;">0</span>
<svg class="a" style="left:95.5px;top:1008px;" width="18.5" height="17" viewBox="0 0 18.5 17" fill="none" stroke="#3b3b3b" stroke-width="1.2" stroke-linecap="round" stroke-linejoin="round"><path d="M9.200 1.800L17.300 15.800H1.200z"/><path d="M9.200 6.500v5M9.200 13.300v.700"/></svg>
<span class="t" id="t138" style="left:119px;top:1006.80px;font-size:15px;color:#3b3b3b;letter-spacing:-1.344px;">0</span>
<span class="t" id="t139" style="left:1196px;top:1005.87px;font-size:16.25px;color:#3b3b3b;letter-spacing:-0.872px;">Ln 1, Col 1</span>
<span class="t" id="t140" style="left:1285.5px;top:1005.87px;font-size:16.25px;color:#3b3b3b;letter-spacing:-1.309px;">Spaces: 4</span>
<span class="t" id="t141" style="left:1366px;top:1005.87px;font-size:16.25px;color:#3b3b3b;letter-spacing:-1.309px;">UTF-8</span>
<span class="t" id="t142" style="left:1426px;top:1005.87px;font-size:16.25px;color:#3b3b3b;letter-spacing:-2.484px;">CRLF</span>
<span class="t" id="t143" style="left:1480.5px;top:1005.87px;font-size:16.25px;color:#3b3b3b;letter-spacing:0.208px;">{ }</span>
<span class="t" id="t144" style="left:1506px;top:1005.87px;font-size:16.25px;color:#3b3b3b;letter-spacing:-0.766px;">Python</span>
<span class="t" id="t145" style="left:1731px;top:1005.87px;font-size:16.25px;color:#3b3b3b;letter-spacing:-0.456px;">Antigravity - Settings</span>
<div class="a" style="left:1563px;top:1004px;width:158px;height:26px;background:#7a5d00;"></div>
<svg class="a" style="left:1573px;top:1007.5px;" width="19" height="18" viewBox="0 0 19 18" fill="none" stroke="#ffffff" stroke-width="1.4" stroke-linecap="round" stroke-linejoin="round"><path d="M9.500 1.800L17.800 16H1.200z"/><path d="M9.500 6.800v5M9.500 13.600v.600"/></svg>
<span class="t" id="t146" style="left:1596.7px;top:1005.87px;font-size:16.25px;color:#ffffff;letter-spacing:-0.564px;">Select Interpreter</span>
<svg class="a" style="left:1891px;top:1007px;" width="19" height="20" viewBox="0 0 19 20" fill="none" stroke="#3b3b3b" stroke-width="1.4" stroke-linecap="round" stroke-linejoin="round"><path d="M9.500 2.500a5.500 5.500 0 0 0-5.500 5.500v4.200L2.200 15h14.600L15 12.200V8a5.500 5.500 0 0 0-1.200-3.400"/><path d="M7.500 15.300a2 2 0 0 0 4 0"/><circle cx="14.300" cy="3.900" r="3.300" fill="#2b2b2b" stroke="none"/></svg>
<div class="a" style="left:0px;top:1030px;width:1920px;height:50px;background:#04060a;"></div>
<svg class="a" style="left:20px;top:1044.5px;" width="20" height="20" viewBox="0 0 20 20" fill="#ffffff" stroke="none" stroke-width="0" stroke-linecap="round" stroke-linejoin="round"><path d="M0 2.800L8.500 1.600v7.900H0zM9.700 1.400L20 0v9.500H9.700zM0 10.700h8.500v7.900L0 17.400zM9.700 10.700H20V20L9.700 18.600z"/></svg>
<svg class="a" style="left:78px;top:1043px;" width="24" height="24" viewBox="0 0 24 24" fill="none" stroke="#ffffff" stroke-width="1.7" stroke-linecap="round" stroke-linejoin="round"><circle cx="14.500" cy="9.500" r="6.800"/><path d="M9.700 14.300L2.500 21.500"/></svg>
<svg class="a" style="left:139px;top:1044px;" width="22" height="21" viewBox="0 0 22 21" fill="none" stroke="#ffffff" stroke-width="1.5" stroke-linecap="round" stroke-linejoin="round"><path d="M1 4.500h14v12H1zM1 1v1.200M15 1v1.200M1 18.800V20M15 18.800V20M1 1.600h14M1 19.400h14" stroke-linecap="butt"/><path d="M19.500 1v4.500M19.500 8v5M19.500 15.500V20" stroke-linecap="butt"/></svg>
<svg class="a" style="left:199px;top:1042px;" width="30" height="25" viewBox="0 0 30 25" fill="none" stroke="none" stroke-width="0" stroke-linecap="round" stroke-linejoin="round"><path d="M1 3.500a1 1 0 0 1 1-1h8.500l2 2.500H28a1 1 0 0 1 1 1v16a1 1 0 0 1-1 1H2a1 1 0 0 1-1-1z" fill="#f4b400"/><path d="M1 7.500h28v14.500a1 1 0 0 1-1 1H2a1 1 0 0 1-1-1z" fill="#ffe08a"/><path d="M7 15.500h16V23H7z" fill="#3c9ae8"/><path d="M11 18.500h8V23h-8z" fill="#ffe08a"/><rect x="3" y="3.800" width="5" height="1.200" fill="#fff6d0"/></svg>
<svg class="a" style="left:261px;top:1040px;" width="32" height="32" viewBox="0 0 32 32" fill="none" stroke="none" stroke-width="0" stroke-linecap="round" stroke-linejoin="round"><circle cx="15" cy="15" r="14" fill="#fbc116"/><path d="M15 15L2.900 8A14 14 0 0 1 27.100 8z" fill="#e33b2e"/><path d="M15 15L2.900 8A14 14 0 0 0 15 29l7-12z" fill="#2da94f" transform="rotate(0 15 15)"/><path d="M2.900 8a14 14 0 0 0 9.500 20.800L19 17.300 8.900 11.500z" fill="#2da94f"/><path d="M27.100 8H15l6.100 10.500L15 29A14 14 0 0 0 27.100 8z" fill="#fbc116"/><circle cx="15" cy="15" r="6.300" fill="#ffffff"/><circle cx="15" cy="15" r="5" fill="#3b7ded"/><circle cx="22.500" cy="22.500" r="8.300" fill="#dfe6f5" stroke="#5d7fc9" stroke-width="1.600"/><circle cx="22.500" cy="20.300" r="2.600" fill="none" stroke="#4469c0" stroke-width="1.500"/><path d="M17.800 26.300c.9-2.300 2.600-3 4.700-3s3.800.7 4.700 3" fill="none" stroke="#4469c0" stroke-width="1.500"/></svg>
<svg class="a" style="left:323.5px;top:1043px;" width="29" height="23" viewBox="0 0 29 23" fill="none" stroke="none" stroke-width="0" stroke-linecap="round" stroke-linejoin="round"><rect x=".800" y=".800" width="27.400" height="21.400" fill="#050505" stroke="#9a9a9a" stroke-width="1.300"/><rect x="1.500" y="1.500" width="26" height="3" fill="#2a2a2a" stroke="none"/><path d="M4 8h3M8 8.800h6" stroke="#d0d0d0" stroke-width="1.200"/></svg>
<svg class="a" style="left:387px;top:1042px;" width="26" height="26" viewBox="0 0 26 26" fill="none" stroke="none" stroke-width="0" stroke-linecap="round" stroke-linejoin="round"><path d="M10.700 1h4.600l.7 3.300 2.100.9 2.800-1.900 3.300 3.300-1.900 2.800.9 2.100 3.300.7v4.600l-3.300.7-.9 2.100 1.900 2.800-3.300 3.300-2.800-1.900-2.100.9-.7 3.300h-4.600l-.7-3.300-2.100-.9-2.800 1.900-3.300-3.300 1.900-2.800-.9-2.100L1 15.300v-4.600l3.300-.7.900-2.100-1.900-2.800 3.300-3.300 2.800 1.900 2.100-.9zM13 8.200a4.800 4.800 0 1 0 0 9.600 4.800 4.800 0 0 0 0-9.600z" fill="#ffffff" fill-rule="evenodd"/></svg>
<div class="a" style="left:432px;top:1030px;width:61px;height:50px;background:#2b2e33;"></div>
<div class="a" style="left:447px;top:1040px;width:30px;height:30px;background:#17191c;border-radius:2px;"></div>
<svg class="a" style="left:450px;top:1044px" width="24" height="22" viewBox="0 0 24 22"><defs><linearGradient id="ag" x1="0" y1="1" x2="1" y2="0"><stop offset="0" stop-color="#3b6ff0"/><stop offset=".45" stop-color="#3f8cf5"/><stop offset=".62" stop-color="#35b36b"/><stop offset=".78" stop-color="#f2b233"/><stop offset="1" stop-color="#ea5a3c"/></linearGradient></defs><path d="M12 1c2 0 3 2 4.200 5.500 1.600 4.700 3.300 9.500 6.300 13.500 .600 .800-.300 1.500-1.100 1-3.400-2.300-5-6.500-9.400-6.500S6 18.700 2.600 21c-.800.500-1.700-.200-1.100-1 3-4 4.700-8.800 6.300-13.500C9 3 10 1 12 1z" fill="url(#ag)"/></svg>
<div class="a" style="left:189px;top:1077.5px;width:51px;height:2.5px;background:#76b9ed;"></div>
<div class="a" style="left:251px;top:1077.5px;width:51px;height:2.5px;background:#76b9ed;"></div>
<div class="a" style="left:313.5px;top:1077.5px;width:50.5px;height:2.5px;background:#76b9ed;"></div>
<div class="a" style="left:375px;top:1077.5px;width:51px;height:2.5px;background:#76b9ed;"></div>
<div class="a" style="left:432px;top:1077.5px;width:61px;height:2.5px;background:#76b9ed;"></div>
<svg class="a" style="left:1642px;top:1050px;" width="17" height="10" viewBox="0 0 17 10" fill="none" stroke="#ffffff" stroke-width="1.4" stroke-linecap="round" stroke-linejoin="round"><path d="M1 9l7.500-7.500L16 9"/></svg>
<svg class="a" style="left:1669px;top:1045px;" width="22" height="19" viewBox="0 0 22 19" fill="none" stroke="#ffffff" stroke-width="1.3" stroke-linecap="round" stroke-linejoin="round"><path d="M3.500 2h17v12h-17z"/><path d="M8 18h8M12 14v4"/><path d="M1 1h4v6H1z" fill="#04060a"/><path d="M2.500 3v1.500" stroke-width="1"/></svg>
<svg class="a" style="left:1699px;top:1044px;" width="23" height="21" viewBox="0 0 23 21" fill="none" stroke="#ffffff" stroke-width="1.3" stroke-linecap="round" stroke-linejoin="round"><path d="M1.500 7.500h3.500L10 3v15L5 13.500H1.500z"/><path d="M13 8a3.500 3.500 0 0 1 0 5" /><path d="M15.800 5.500a7 7 0 0 1 0 10" stroke="#9a9a9a"/><path d="M18.600 3a10.500 10.500 0 0 1 0 15" stroke="#6a6a6a"/></svg>
<span class="t" id="t147" style="left:1733.5px;top:1044.80px;font-size:15px;color:#ffffff;letter-spacing:-1.339px;">ENG</span>
<span class="t" id="t148" style="left:1781.8px;top:1033.80px;font-size:15px;color:#ffffff;letter-spacing:-0.299px;">12:23 AM</span>
<span class="t" id="t149" style="left:1778px;top:1056.80px;font-size:15px;color:#ffffff;letter-spacing:0.196px;">2/23/2026</span>
<svg class="a" style="left:1869px;top:1045px;" width="21" height="19" viewBox="0 0 21 19" fill="none" stroke="none" stroke-width="0" stroke-linecap="round" stroke-linejoin="round"><path d="M0 0h20v14H9.500L6 18v-4H0z" fill="#ffffff"/><path d="M3.500 3.500h13M3.500 6.500h13M3.500 9.500h13" stroke="#04060a" stroke-width="1.200"/></svg>
<div class="a" style="left:1878px;top:1054.5px;width:20px;height:20px;background:#37393d;border-radius:50%;border:1.500px solid #5c5e62;"></div>
<span class="t" id="t150" style="left:1883.8px;top:1055.18px;font-size:14.5px;color:#ffffff;font-weight:700;letter-spacing:0.422px;">2</span>
<div class="a" style="left:1914px;top:1030px;width:1px;height:50px;background:#5a5c60;"></div>
<svg class="a" style="left:980px;top:396.5px;" width="14" height="21" viewBox="0 0 14 21" fill="none" stroke="none" stroke-width="0" stroke-linecap="round" stroke-linejoin="round"><path d="M1 1v16.200l3.900-3.700 2.600 6 2.200-1-2.600-5.800h5.200z" fill="#ffffff" stroke="#111111" stroke-width="1.100" stroke-linejoin="miter"/></svg>
<svg class="a" style="left:0;top:0;overflow:visible" width="340" height="64" viewBox="0 0 340 64"><text y="46" transform="scale(0.95,1)" font-family="Liberation Serif, serif" font-size="52" fill="#ffffff" stroke="#000000" stroke-width="5.400" stroke-linejoin="round" paint-order="stroke" xml:space="preserve"><tspan x="8.7 34.5 66.3 85.5 110.0">17:37</tspan> <tspan font-size="44" x="166.6" dy="-3.600">(</tspan><tspan x="186.8 213.9 238.9 264.0 291.6" dy="3.600">1057s</tspan><tspan font-size="44" x="320.5" dy="-3.600">)</tspan></text></svg>
</body></html>
